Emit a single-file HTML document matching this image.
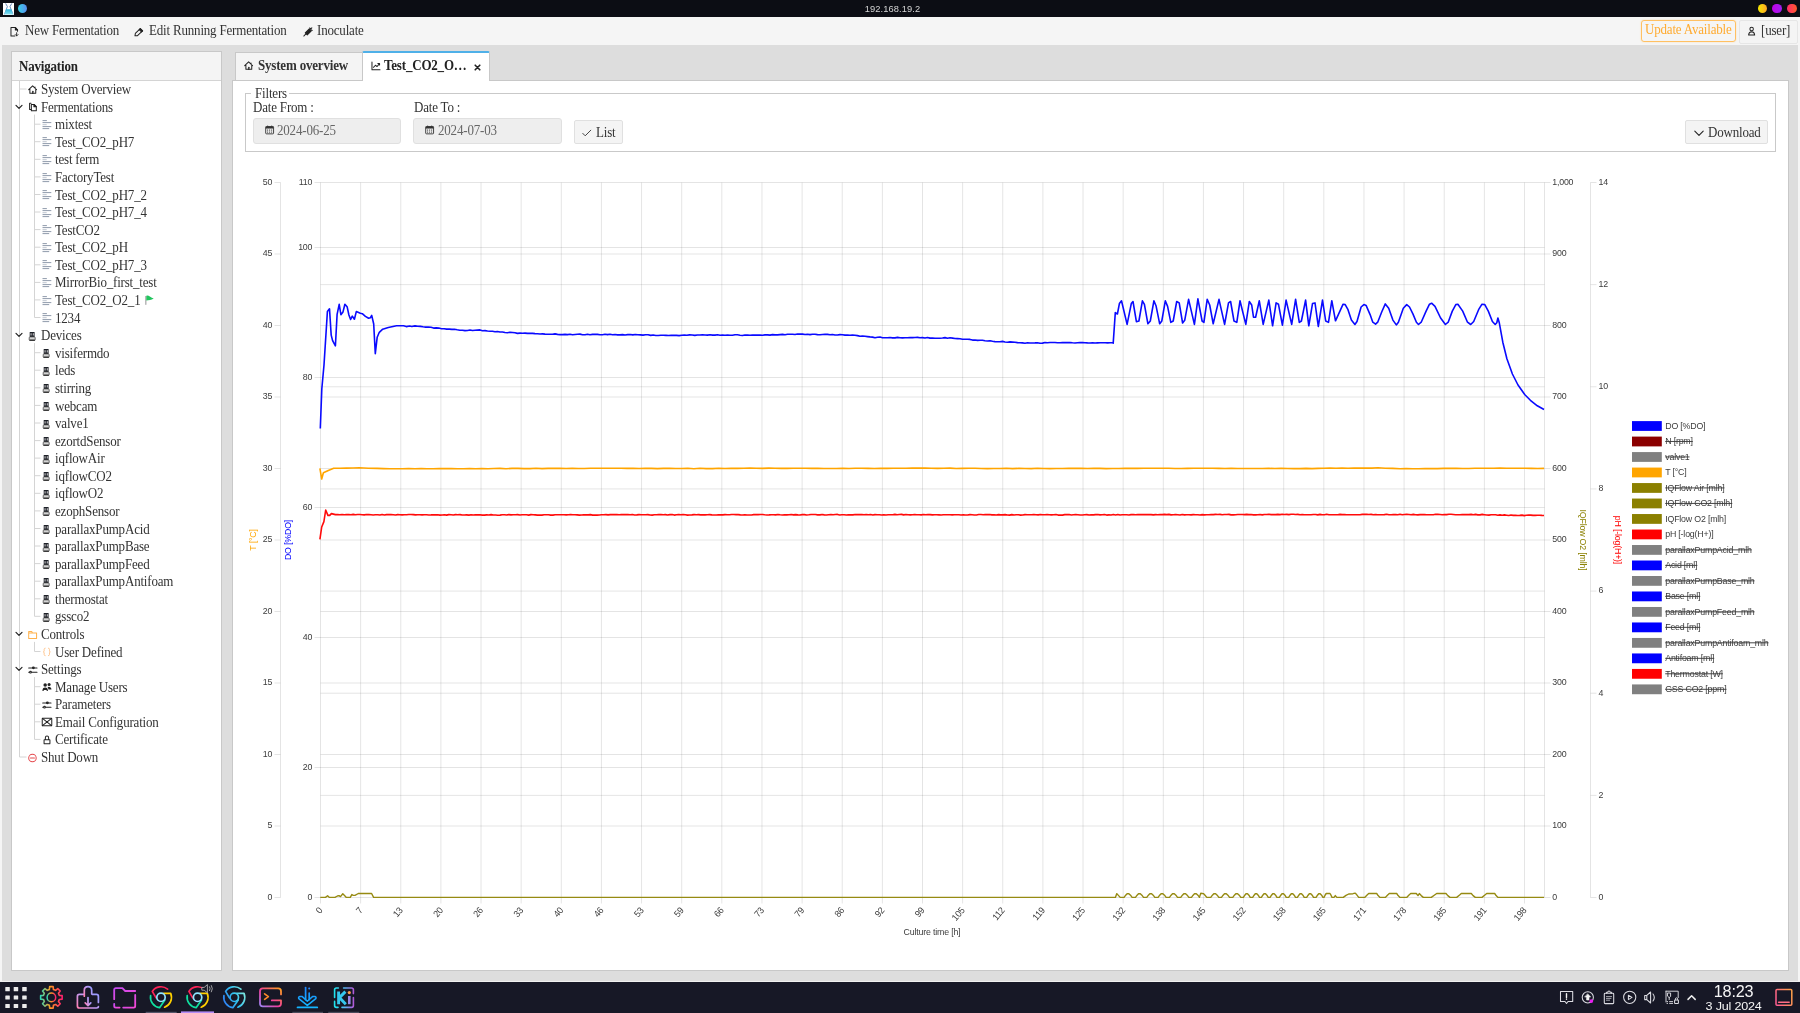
<!DOCTYPE html>
<html lang="en"><head><meta charset="utf-8"><title>192.168.19.2</title>
<style>
*{box-sizing:border-box}
html,body{margin:0;padding:0}
body{width:1800px;height:1013px;overflow:hidden;position:relative;background:#dddddd;will-change:transform;
 font-family:"Liberation Serif",serif;font-size:14px;letter-spacing:-0.2px;color:#333;line-height:15px}
.x{display:inline-block;white-space:nowrap;transform:scaleX(.928);transform-origin:0 50%}
.abs{position:absolute}
.ic{width:12px;height:12px;display:block}
.ic svg{display:block}
.tr{white-space:nowrap;height:17px;line-height:17px;color:#333;transform:scaleX(.928);transform-origin:0 50%}
#title{left:0;top:0;width:1800px;height:17px;background:#0c0d14}
#title .t{left:0;width:1785px;top:4px;text-align:center;font:9.3px "Liberation Sans",sans-serif;letter-spacing:0.1px;color:#d4d4d4;line-height:10px}
#tool{left:0;top:17px;width:1800px;height:28px;background:#f5f5f5}
.tb{white-space:nowrap;line-height:17px;color:#333;transform:scaleX(.928);transform-origin:0 50%}
#nav{left:11px;top:51px;width:211px;height:920px;background:#fff;border:1px solid #c8c8c8}
#navh{left:0;top:0;width:209px;height:29px;background:#f4f4f4;border-bottom:1px solid #d4d4d4}
#panel{left:232px;top:80px;width:1557px;height:891px;background:#fff;border:1px solid #c8c8c8}
.tab{top:52px;height:29px;background:#f4f4f4;border:1px solid #c8c8c8;border-bottom:none;font-weight:bold;white-space:nowrap}
#task{left:0;top:982px;width:1800px;height:31px;background:#171826}
.inp{height:26px;background:#eeeeee;border:1px solid #e0e0e0;border-radius:3px;color:#666}
.btn{background:#f4f4f4;border:1px solid #e0e0e0;border-radius:2px;white-space:nowrap}
</style></head><body>
<!-- side strips -->
<div class="abs" style="left:0;top:17px;width:2px;height:965px;background:#f5f5f5"></div>
<div class="abs" style="left:1798px;top:17px;width:2px;height:965px;background:#f5f5f5"></div>
<!-- title bar -->
<div id="title" class="abs">
 <span class="abs" style="left:2.8px;top:3px"><svg width="11.4" height="12" viewBox="0 0 11.4 12" ><defs><linearGradient id="gL" x1="0" y1="0" x2="0" y2="1"><stop offset="0" stop-color="#2ab4dc"/><stop offset="1" stop-color="#8fe2f2"/></linearGradient></defs><rect x="0" y="0" width="11.4" height="12" fill="#ffffff"/><path d="M2.6 0.4L4.4 3.6L1.4 11.4M8.8 0.4L7 3.6L10 11.4" fill="none" stroke="#5a7fb4" stroke-width=".9"/><path d="M3.1 6.2H8.3L10.2 11.6H1.2Z" fill="url(#gL)"/></svg></span>
 <span class="abs" style="left:18.1px;top:4.1px;width:9.4px;height:9.4px;border-radius:50%;background:linear-gradient(90deg,#36d2e6,#5b8df0)"></span>
 <div class="abs t">192.168.19.2</div>
 <span class="abs" style="left:1757.8px;top:4px;width:9.4px;height:9.4px;border-radius:50%;background:linear-gradient(90deg,#f4e800,#ffa726)"></span>
 <span class="abs" style="left:1772.4px;top:4px;width:9.4px;height:9.4px;border-radius:50%;background:linear-gradient(90deg,#c000e8,#a020f0)"></span>
 <span class="abs" style="left:1787.2px;top:4px;width:9.4px;height:9.4px;border-radius:50%;background:linear-gradient(90deg,#ff2d6a,#ff5a2a)"></span>
</div>
<!-- toolbar -->
<div id="tool" class="abs">
 <span class="abs ic" style="left:8.9px;top:8.5px"><svg width="12" height="12" viewBox="-0.55 -0.55 13.1 13.1" ><g fill="none" stroke="#222" stroke-width="1.1" stroke-linecap="round" stroke-linejoin="round" stroke-width="1.25"><path d="M8.8 5.2V3.6L6.6 1.2H1.6V10.4H5.8"/><path d="M6.4 1.4V3.8H8.8Z" fill="#222"/><path d="M7.8 6.8V10.2M6.3 8.8L7.8 10.3L9.3 8.8" stroke-width="1"/></g></svg></span><span class="abs tb" style="left:25px;top:5.3px">New Fermentation</span>
 <span class="abs ic" style="left:133px;top:8.5px"><svg width="12" height="12" viewBox="-0.55 -0.55 13.1 13.1" ><g fill="none" stroke="#222" stroke-width="1.1" stroke-linecap="round" stroke-linejoin="round" stroke-width="1.2"><path d="M1.6 10.2L2 7.6L7.4 2.4L9.8 4.8L4.4 10Z"/><path d="M6.2 3.4L8.8 6L10 4.8L7.4 2.2Z" fill="#222"/></g></svg></span><span class="abs tb" style="left:148.5px;top:5.3px">Edit Running Fermentation</span>
 <span class="abs ic" style="left:301.5px;top:8.5px"><svg width="12" height="12" viewBox="-0.55 -0.55 13.1 13.1" ><g fill="none" stroke="#222" stroke-width="1.1" stroke-linecap="round" stroke-linejoin="round" stroke-width="1.2"><path d="M1.4 10.4L3.4 8.4"/><path d="M3 7L7.4 2.6L9.6 4.8L5.2 9.2Z" fill="#222"/><path d="M7.8 1.6L10.6 4.4M8.8 2.8L10.2 1.4"/></g></svg></span><span class="abs tb" style="left:316.5px;top:5.3px">Inoculate</span>
 <div class="abs" style="left:1641px;top:2.5px;width:95px;height:22.5px;border:1px solid #ffc062;border-radius:3px;box-shadow:0 0 1.5px #ffd699;color:#ffab30;line-height:18.5px;padding-left:2.6px;white-space:nowrap"><span class="x">Update Available</span></div>
 <div class="abs btn" style="left:1739px;top:3px;width:59px;height:23.5px;border-color:#e6e6e6"><span class="abs ic" style="left:6px;top:4px"><svg width="12" height="12" viewBox="-0.55 -0.55 13.1 13.1" ><g fill="none" stroke="#222" stroke-width="1.1" stroke-linecap="round" stroke-linejoin="round" stroke="#333" stroke-width=".95"><circle cx="5.6" cy="3.9" r="1.9"/><path d="M2.3 10.4Q2.5 7 5.6 6.8Q8.7 7 8.9 10.4Z"/></g></svg></span><span class="abs tb" style="left:21.3px;top:1px">[user]</span></div>
</div>
<!-- navigation -->
<div id="nav" class="abs"><div id="navh" class="abs"><span class="abs x" style="left:6.5px;top:6.7px;font-weight:bold;color:#222">Navigation</span></div></div>
<svg class="abs" style="left:0;top:0" width="230" height="800" fill="none" stroke="#d4d4d4" stroke-width="1"><path d="M19.5 80.5V757.0" /><path d="M19.5 89.0H26.5" /><path d="M34.5 114.6V317.5" /><path d="M34.5 124.2H40.5" /><path d="M34.5 141.7H40.5" /><path d="M34.5 159.3H40.5" /><path d="M34.5 176.9H40.5" /><path d="M34.5 194.5H40.5" /><path d="M34.5 212.0H40.5" /><path d="M34.5 229.6H40.5" /><path d="M34.5 247.2H40.5" /><path d="M34.5 264.8H40.5" /><path d="M34.5 282.4H40.5" /><path d="M34.5 299.9H40.5" /><path d="M34.5 317.5H40.5" /><path d="M34.5 343.1V616.3" /><path d="M34.5 352.7H40.5" /><path d="M34.5 370.2H40.5" /><path d="M34.5 387.8H40.5" /><path d="M34.5 405.4H40.5" /><path d="M34.5 423.0H40.5" /><path d="M34.5 440.6H40.5" /><path d="M34.5 458.1H40.5" /><path d="M34.5 475.7H40.5" /><path d="M34.5 493.3H40.5" /><path d="M34.5 510.9H40.5" /><path d="M34.5 528.5H40.5" /><path d="M34.5 546.0H40.5" /><path d="M34.5 563.6H40.5" /><path d="M34.5 581.2H40.5" /><path d="M34.5 598.8H40.5" /><path d="M34.5 616.3H40.5" /><path d="M34.5 641.9V651.5" /><path d="M34.5 651.5H40.5" /><path d="M34.5 677.1V739.4" /><path d="M34.5 686.7H40.5" /><path d="M34.5 704.2H40.5" /><path d="M34.5 721.8H40.5" /><path d="M34.5 739.4H40.5" /><path d="M19.5 757.0H26.5" /></svg>
<span class="abs ic" style="left:27px;top:83.60px"><svg width="12" height="12" viewBox="-0.55 -0.55 13.1 13.1" ><g fill="none" stroke="#222" stroke-width="1.1" stroke-linecap="round" stroke-linejoin="round"><path d="M1.3 5.6L5.6 1.5L7.6 3.3M8.2 2.6V4M9.9 5.6L8.9 4.8M2.6 5V9.6H9V5"/><path d="M5.8 9.6V7.4" stroke-width="1.4"/></g></svg></span>
<span class="abs tr" style="left:41px;top:81.10px">System Overview</span>
<svg class="abs" style="left:14px;top:102.98px" width="10" height="8" viewBox="0 0 10 8" fill="none" stroke="#222" stroke-width="1.2" stroke-linecap="round" stroke-linejoin="round"><path d="M2 2.4L5 5.4L8 2.4"/></svg>
<span class="abs ic" style="left:27px;top:101.18px"><svg width="12" height="12" viewBox="-0.55 -0.55 13.1 13.1" ><g fill="none" stroke="#222" stroke-width="1.1" stroke-linecap="round" stroke-linejoin="round"><path d="M3.9 2H2.3V8.6H3.9"/><path d="M4.2 3.2H7L9.6 5.7V10.2H4.2Z"/><path d="M7 3.2V5.7H9.6Z" fill="#222"/></g></svg></span>
<span class="abs tr" style="left:41px;top:98.68px">Fermentations</span>
<span class="abs ic" style="left:40.5px;top:117.86px"><svg width="12" height="12" viewBox="0 0 12 12" ><g stroke="#6b7a90" stroke-width="0.75" fill="none"><path d="M1.5 2.6H5.9"/><path d="M1.5 4.6H10.3"/><path d="M1.5 6.7H5.7" opacity=".6"/><path d="M1.5 8.6H10.3"/><path d="M1.5 10.6H8.2"/></g></svg></span>
<span class="abs tr" style="left:55px;top:116.26px">mixtest</span>
<span class="abs ic" style="left:40.5px;top:135.43px"><svg width="12" height="12" viewBox="0 0 12 12" ><g stroke="#6b7a90" stroke-width="0.75" fill="none"><path d="M1.5 2.6H5.9"/><path d="M1.5 4.6H10.3"/><path d="M1.5 6.7H5.7" opacity=".6"/><path d="M1.5 8.6H10.3"/><path d="M1.5 10.6H8.2"/></g></svg></span>
<span class="abs tr" style="left:55px;top:133.83px">Test_CO2_pH7</span>
<span class="abs ic" style="left:40.5px;top:153.01px"><svg width="12" height="12" viewBox="0 0 12 12" ><g stroke="#6b7a90" stroke-width="0.75" fill="none"><path d="M1.5 2.6H5.9"/><path d="M1.5 4.6H10.3"/><path d="M1.5 6.7H5.7" opacity=".6"/><path d="M1.5 8.6H10.3"/><path d="M1.5 10.6H8.2"/></g></svg></span>
<span class="abs tr" style="left:55px;top:151.41px">test ferm</span>
<span class="abs ic" style="left:40.5px;top:170.59px"><svg width="12" height="12" viewBox="0 0 12 12" ><g stroke="#6b7a90" stroke-width="0.75" fill="none"><path d="M1.5 2.6H5.9"/><path d="M1.5 4.6H10.3"/><path d="M1.5 6.7H5.7" opacity=".6"/><path d="M1.5 8.6H10.3"/><path d="M1.5 10.6H8.2"/></g></svg></span>
<span class="abs tr" style="left:55px;top:168.99px">FactoryTest</span>
<span class="abs ic" style="left:40.5px;top:188.17px"><svg width="12" height="12" viewBox="0 0 12 12" ><g stroke="#6b7a90" stroke-width="0.75" fill="none"><path d="M1.5 2.6H5.9"/><path d="M1.5 4.6H10.3"/><path d="M1.5 6.7H5.7" opacity=".6"/><path d="M1.5 8.6H10.3"/><path d="M1.5 10.6H8.2"/></g></svg></span>
<span class="abs tr" style="left:55px;top:186.57px">Test_CO2_pH7_2</span>
<span class="abs ic" style="left:40.5px;top:205.75px"><svg width="12" height="12" viewBox="0 0 12 12" ><g stroke="#6b7a90" stroke-width="0.75" fill="none"><path d="M1.5 2.6H5.9"/><path d="M1.5 4.6H10.3"/><path d="M1.5 6.7H5.7" opacity=".6"/><path d="M1.5 8.6H10.3"/><path d="M1.5 10.6H8.2"/></g></svg></span>
<span class="abs tr" style="left:55px;top:204.15px">Test_CO2_pH7_4</span>
<span class="abs ic" style="left:40.5px;top:223.32px"><svg width="12" height="12" viewBox="0 0 12 12" ><g stroke="#6b7a90" stroke-width="0.75" fill="none"><path d="M1.5 2.6H5.9"/><path d="M1.5 4.6H10.3"/><path d="M1.5 6.7H5.7" opacity=".6"/><path d="M1.5 8.6H10.3"/><path d="M1.5 10.6H8.2"/></g></svg></span>
<span class="abs tr" style="left:55px;top:221.72px">TestCO2</span>
<span class="abs ic" style="left:40.5px;top:240.90px"><svg width="12" height="12" viewBox="0 0 12 12" ><g stroke="#6b7a90" stroke-width="0.75" fill="none"><path d="M1.5 2.6H5.9"/><path d="M1.5 4.6H10.3"/><path d="M1.5 6.7H5.7" opacity=".6"/><path d="M1.5 8.6H10.3"/><path d="M1.5 10.6H8.2"/></g></svg></span>
<span class="abs tr" style="left:55px;top:239.30px">Test_CO2_pH</span>
<span class="abs ic" style="left:40.5px;top:258.48px"><svg width="12" height="12" viewBox="0 0 12 12" ><g stroke="#6b7a90" stroke-width="0.75" fill="none"><path d="M1.5 2.6H5.9"/><path d="M1.5 4.6H10.3"/><path d="M1.5 6.7H5.7" opacity=".6"/><path d="M1.5 8.6H10.3"/><path d="M1.5 10.6H8.2"/></g></svg></span>
<span class="abs tr" style="left:55px;top:256.88px">Test_CO2_pH7_3</span>
<span class="abs ic" style="left:40.5px;top:276.06px"><svg width="12" height="12" viewBox="0 0 12 12" ><g stroke="#6b7a90" stroke-width="0.75" fill="none"><path d="M1.5 2.6H5.9"/><path d="M1.5 4.6H10.3"/><path d="M1.5 6.7H5.7" opacity=".6"/><path d="M1.5 8.6H10.3"/><path d="M1.5 10.6H8.2"/></g></svg></span>
<span class="abs tr" style="left:55px;top:274.46px">MirrorBio_first_test</span>
<span class="abs ic" style="left:40.5px;top:293.64px"><svg width="12" height="12" viewBox="0 0 12 12" ><g stroke="#6b7a90" stroke-width="0.75" fill="none"><path d="M1.5 2.6H5.9"/><path d="M1.5 4.6H10.3"/><path d="M1.5 6.7H5.7" opacity=".6"/><path d="M1.5 8.6H10.3"/><path d="M1.5 10.6H8.2"/></g></svg></span>
<span class="abs tr" style="left:55px;top:292.04px">Test_CO2_O2_1<svg style="margin-left:5px;vertical-align:-0.2px" width="10" height="10" viewBox="0 0 10 10"><path d="M0.9 1V9.8" stroke="#8c8c8c" stroke-width="1"/><path d="M1.4 0.7Q3.4 0.2 5.2 1.4Q7.4 2.8 9.4 3.4Q7.2 4.6 5.4 4.9Q3.2 5.2 1.4 5.6Z" fill="#22c55e"/></svg></span>
<span class="abs ic" style="left:40.5px;top:311.21px"><svg width="12" height="12" viewBox="0 0 12 12" ><g stroke="#6b7a90" stroke-width="0.75" fill="none"><path d="M1.5 2.6H5.9"/><path d="M1.5 4.6H10.3"/><path d="M1.5 6.7H5.7" opacity=".6"/><path d="M1.5 8.6H10.3"/><path d="M1.5 10.6H8.2"/></g></svg></span>
<span class="abs tr" style="left:55px;top:309.61px">1234</span>
<svg class="abs" style="left:14px;top:331.49px" width="10" height="8" viewBox="0 0 10 8" fill="none" stroke="#222" stroke-width="1.2" stroke-linecap="round" stroke-linejoin="round"><path d="M2 2.4L5 5.4L8 2.4"/></svg>
<span class="abs ic" style="left:27px;top:329.69px"><svg width="12" height="12" viewBox="0 0 12 12" ><rect x="2.7" y="1.9" width="4.9" height="5.2" rx=".5" fill="#1e2128"/><rect x="3.6" y="3.2" width=".9" height="2.3" fill="#e6e6e6"/><rect x="5.8" y="3.2" width=".9" height="2.3" fill="#e6e6e6"/><rect x="2.2" y="6.9" width="6" height="3.6" rx=".9" fill="#d4d4d4" stroke="#4a4a4a" stroke-width=".8"/><rect x="2.4" y="9.5" width="5.6" height="1.2" rx=".4" fill="#2c2c2c"/></svg></span>
<span class="abs tr" style="left:41px;top:327.19px">Devices</span>
<span class="abs ic" style="left:40.5px;top:347.27px"><svg width="12" height="12" viewBox="0 0 12 12" ><rect x="2.7" y="1.9" width="4.9" height="5.2" rx=".5" fill="#1e2128"/><rect x="3.6" y="3.2" width=".9" height="2.3" fill="#e6e6e6"/><rect x="5.8" y="3.2" width=".9" height="2.3" fill="#e6e6e6"/><rect x="2.2" y="6.9" width="6" height="3.6" rx=".9" fill="#d4d4d4" stroke="#4a4a4a" stroke-width=".8"/><rect x="2.4" y="9.5" width="5.6" height="1.2" rx=".4" fill="#2c2c2c"/></svg></span>
<span class="abs tr" style="left:55px;top:344.77px">visifermdo</span>
<span class="abs ic" style="left:40.5px;top:364.85px"><svg width="12" height="12" viewBox="0 0 12 12" ><rect x="2.7" y="1.9" width="4.9" height="5.2" rx=".5" fill="#1e2128"/><rect x="3.6" y="3.2" width=".9" height="2.3" fill="#e6e6e6"/><rect x="5.8" y="3.2" width=".9" height="2.3" fill="#e6e6e6"/><rect x="2.2" y="6.9" width="6" height="3.6" rx=".9" fill="#d4d4d4" stroke="#4a4a4a" stroke-width=".8"/><rect x="2.4" y="9.5" width="5.6" height="1.2" rx=".4" fill="#2c2c2c"/></svg></span>
<span class="abs tr" style="left:55px;top:362.35px">leds</span>
<span class="abs ic" style="left:40.5px;top:382.43px"><svg width="12" height="12" viewBox="0 0 12 12" ><rect x="2.7" y="1.9" width="4.9" height="5.2" rx=".5" fill="#1e2128"/><rect x="3.6" y="3.2" width=".9" height="2.3" fill="#e6e6e6"/><rect x="5.8" y="3.2" width=".9" height="2.3" fill="#e6e6e6"/><rect x="2.2" y="6.9" width="6" height="3.6" rx=".9" fill="#d4d4d4" stroke="#4a4a4a" stroke-width=".8"/><rect x="2.4" y="9.5" width="5.6" height="1.2" rx=".4" fill="#2c2c2c"/></svg></span>
<span class="abs tr" style="left:55px;top:379.93px">stirring</span>
<span class="abs ic" style="left:40.5px;top:400.00px"><svg width="12" height="12" viewBox="0 0 12 12" ><rect x="2.7" y="1.9" width="4.9" height="5.2" rx=".5" fill="#1e2128"/><rect x="3.6" y="3.2" width=".9" height="2.3" fill="#e6e6e6"/><rect x="5.8" y="3.2" width=".9" height="2.3" fill="#e6e6e6"/><rect x="2.2" y="6.9" width="6" height="3.6" rx=".9" fill="#d4d4d4" stroke="#4a4a4a" stroke-width=".8"/><rect x="2.4" y="9.5" width="5.6" height="1.2" rx=".4" fill="#2c2c2c"/></svg></span>
<span class="abs tr" style="left:55px;top:397.50px">webcam</span>
<span class="abs ic" style="left:40.5px;top:417.58px"><svg width="12" height="12" viewBox="0 0 12 12" ><rect x="2.7" y="1.9" width="4.9" height="5.2" rx=".5" fill="#1e2128"/><rect x="3.6" y="3.2" width=".9" height="2.3" fill="#e6e6e6"/><rect x="5.8" y="3.2" width=".9" height="2.3" fill="#e6e6e6"/><rect x="2.2" y="6.9" width="6" height="3.6" rx=".9" fill="#d4d4d4" stroke="#4a4a4a" stroke-width=".8"/><rect x="2.4" y="9.5" width="5.6" height="1.2" rx=".4" fill="#2c2c2c"/></svg></span>
<span class="abs tr" style="left:55px;top:415.08px">valve1</span>
<span class="abs ic" style="left:40.5px;top:435.16px"><svg width="12" height="12" viewBox="0 0 12 12" ><rect x="2.7" y="1.9" width="4.9" height="5.2" rx=".5" fill="#1e2128"/><rect x="3.6" y="3.2" width=".9" height="2.3" fill="#e6e6e6"/><rect x="5.8" y="3.2" width=".9" height="2.3" fill="#e6e6e6"/><rect x="2.2" y="6.9" width="6" height="3.6" rx=".9" fill="#d4d4d4" stroke="#4a4a4a" stroke-width=".8"/><rect x="2.4" y="9.5" width="5.6" height="1.2" rx=".4" fill="#2c2c2c"/></svg></span>
<span class="abs tr" style="left:55px;top:432.66px">ezortdSensor</span>
<span class="abs ic" style="left:40.5px;top:452.74px"><svg width="12" height="12" viewBox="0 0 12 12" ><rect x="2.7" y="1.9" width="4.9" height="5.2" rx=".5" fill="#1e2128"/><rect x="3.6" y="3.2" width=".9" height="2.3" fill="#e6e6e6"/><rect x="5.8" y="3.2" width=".9" height="2.3" fill="#e6e6e6"/><rect x="2.2" y="6.9" width="6" height="3.6" rx=".9" fill="#d4d4d4" stroke="#4a4a4a" stroke-width=".8"/><rect x="2.4" y="9.5" width="5.6" height="1.2" rx=".4" fill="#2c2c2c"/></svg></span>
<span class="abs tr" style="left:55px;top:450.24px">iqflowAir</span>
<span class="abs ic" style="left:40.5px;top:470.32px"><svg width="12" height="12" viewBox="0 0 12 12" ><rect x="2.7" y="1.9" width="4.9" height="5.2" rx=".5" fill="#1e2128"/><rect x="3.6" y="3.2" width=".9" height="2.3" fill="#e6e6e6"/><rect x="5.8" y="3.2" width=".9" height="2.3" fill="#e6e6e6"/><rect x="2.2" y="6.9" width="6" height="3.6" rx=".9" fill="#d4d4d4" stroke="#4a4a4a" stroke-width=".8"/><rect x="2.4" y="9.5" width="5.6" height="1.2" rx=".4" fill="#2c2c2c"/></svg></span>
<span class="abs tr" style="left:55px;top:467.82px">iqflowCO2</span>
<span class="abs ic" style="left:40.5px;top:487.89px"><svg width="12" height="12" viewBox="0 0 12 12" ><rect x="2.7" y="1.9" width="4.9" height="5.2" rx=".5" fill="#1e2128"/><rect x="3.6" y="3.2" width=".9" height="2.3" fill="#e6e6e6"/><rect x="5.8" y="3.2" width=".9" height="2.3" fill="#e6e6e6"/><rect x="2.2" y="6.9" width="6" height="3.6" rx=".9" fill="#d4d4d4" stroke="#4a4a4a" stroke-width=".8"/><rect x="2.4" y="9.5" width="5.6" height="1.2" rx=".4" fill="#2c2c2c"/></svg></span>
<span class="abs tr" style="left:55px;top:485.39px">iqflowO2</span>
<span class="abs ic" style="left:40.5px;top:505.47px"><svg width="12" height="12" viewBox="0 0 12 12" ><rect x="2.7" y="1.9" width="4.9" height="5.2" rx=".5" fill="#1e2128"/><rect x="3.6" y="3.2" width=".9" height="2.3" fill="#e6e6e6"/><rect x="5.8" y="3.2" width=".9" height="2.3" fill="#e6e6e6"/><rect x="2.2" y="6.9" width="6" height="3.6" rx=".9" fill="#d4d4d4" stroke="#4a4a4a" stroke-width=".8"/><rect x="2.4" y="9.5" width="5.6" height="1.2" rx=".4" fill="#2c2c2c"/></svg></span>
<span class="abs tr" style="left:55px;top:502.97px">ezophSensor</span>
<span class="abs ic" style="left:40.5px;top:523.05px"><svg width="12" height="12" viewBox="0 0 12 12" ><rect x="2.7" y="1.9" width="4.9" height="5.2" rx=".5" fill="#1e2128"/><rect x="3.6" y="3.2" width=".9" height="2.3" fill="#e6e6e6"/><rect x="5.8" y="3.2" width=".9" height="2.3" fill="#e6e6e6"/><rect x="2.2" y="6.9" width="6" height="3.6" rx=".9" fill="#d4d4d4" stroke="#4a4a4a" stroke-width=".8"/><rect x="2.4" y="9.5" width="5.6" height="1.2" rx=".4" fill="#2c2c2c"/></svg></span>
<span class="abs tr" style="left:55px;top:520.55px">parallaxPumpAcid</span>
<span class="abs ic" style="left:40.5px;top:540.63px"><svg width="12" height="12" viewBox="0 0 12 12" ><rect x="2.7" y="1.9" width="4.9" height="5.2" rx=".5" fill="#1e2128"/><rect x="3.6" y="3.2" width=".9" height="2.3" fill="#e6e6e6"/><rect x="5.8" y="3.2" width=".9" height="2.3" fill="#e6e6e6"/><rect x="2.2" y="6.9" width="6" height="3.6" rx=".9" fill="#d4d4d4" stroke="#4a4a4a" stroke-width=".8"/><rect x="2.4" y="9.5" width="5.6" height="1.2" rx=".4" fill="#2c2c2c"/></svg></span>
<span class="abs tr" style="left:55px;top:538.13px">parallaxPumpBase</span>
<span class="abs ic" style="left:40.5px;top:558.21px"><svg width="12" height="12" viewBox="0 0 12 12" ><rect x="2.7" y="1.9" width="4.9" height="5.2" rx=".5" fill="#1e2128"/><rect x="3.6" y="3.2" width=".9" height="2.3" fill="#e6e6e6"/><rect x="5.8" y="3.2" width=".9" height="2.3" fill="#e6e6e6"/><rect x="2.2" y="6.9" width="6" height="3.6" rx=".9" fill="#d4d4d4" stroke="#4a4a4a" stroke-width=".8"/><rect x="2.4" y="9.5" width="5.6" height="1.2" rx=".4" fill="#2c2c2c"/></svg></span>
<span class="abs tr" style="left:55px;top:555.71px">parallaxPumpFeed</span>
<span class="abs ic" style="left:40.5px;top:575.78px"><svg width="12" height="12" viewBox="0 0 12 12" ><rect x="2.7" y="1.9" width="4.9" height="5.2" rx=".5" fill="#1e2128"/><rect x="3.6" y="3.2" width=".9" height="2.3" fill="#e6e6e6"/><rect x="5.8" y="3.2" width=".9" height="2.3" fill="#e6e6e6"/><rect x="2.2" y="6.9" width="6" height="3.6" rx=".9" fill="#d4d4d4" stroke="#4a4a4a" stroke-width=".8"/><rect x="2.4" y="9.5" width="5.6" height="1.2" rx=".4" fill="#2c2c2c"/></svg></span>
<span class="abs tr" style="left:55px;top:573.28px">parallaxPumpAntifoam</span>
<span class="abs ic" style="left:40.5px;top:593.36px"><svg width="12" height="12" viewBox="0 0 12 12" ><rect x="2.7" y="1.9" width="4.9" height="5.2" rx=".5" fill="#1e2128"/><rect x="3.6" y="3.2" width=".9" height="2.3" fill="#e6e6e6"/><rect x="5.8" y="3.2" width=".9" height="2.3" fill="#e6e6e6"/><rect x="2.2" y="6.9" width="6" height="3.6" rx=".9" fill="#d4d4d4" stroke="#4a4a4a" stroke-width=".8"/><rect x="2.4" y="9.5" width="5.6" height="1.2" rx=".4" fill="#2c2c2c"/></svg></span>
<span class="abs tr" style="left:55px;top:590.86px">thermostat</span>
<span class="abs ic" style="left:40.5px;top:610.94px"><svg width="12" height="12" viewBox="0 0 12 12" ><rect x="2.7" y="1.9" width="4.9" height="5.2" rx=".5" fill="#1e2128"/><rect x="3.6" y="3.2" width=".9" height="2.3" fill="#e6e6e6"/><rect x="5.8" y="3.2" width=".9" height="2.3" fill="#e6e6e6"/><rect x="2.2" y="6.9" width="6" height="3.6" rx=".9" fill="#d4d4d4" stroke="#4a4a4a" stroke-width=".8"/><rect x="2.4" y="9.5" width="5.6" height="1.2" rx=".4" fill="#2c2c2c"/></svg></span>
<span class="abs tr" style="left:55px;top:608.44px">gssco2</span>
<svg class="abs" style="left:14px;top:630.32px" width="10" height="8" viewBox="0 0 10 8" fill="none" stroke="#222" stroke-width="1.2" stroke-linecap="round" stroke-linejoin="round"><path d="M2 2.4L5 5.4L8 2.4"/></svg>
<span class="abs ic" style="left:27px;top:628.52px"><svg width="12" height="12" viewBox="-0.55 -0.55 13.1 13.1" ><path d="M1.3 9.7V2.3H4.6L5.5 3.8H9.9V9.7Z M1.3 3.9H5.5" fill="none" stroke="#ffb24d" stroke-width="1.1" stroke-linejoin="round"/></svg></span>
<span class="abs tr" style="left:41px;top:626.02px">Controls</span>
<span class="abs ic" style="left:40.5px;top:646.10px"><svg width="12" height="12" viewBox="-0.55 -0.55 13.1 13.1" ><g fill="none" stroke="#ffc38a" stroke-width="1" stroke-linecap="round"><path d="M4 1.8Q2.9 1.8 2.9 3V4.8Q2.9 5.8 2 5.9Q2.9 6 2.9 7V8.8Q2.9 10 4 10"/><path d="M7.6 1.8Q8.7 1.8 8.7 3V4.8Q8.7 5.8 9.6 5.9Q8.7 6 8.7 7V8.8Q8.7 10 7.6 10"/></g></svg></span>
<span class="abs tr" style="left:55px;top:643.60px">User Defined</span>
<svg class="abs" style="left:14px;top:665.47px" width="10" height="8" viewBox="0 0 10 8" fill="none" stroke="#222" stroke-width="1.2" stroke-linecap="round" stroke-linejoin="round"><path d="M2 2.4L5 5.4L8 2.4"/></svg>
<span class="abs ic" style="left:27px;top:663.67px"><svg width="12" height="12" viewBox="-0.55 -0.55 13.1 13.1" ><g fill="none" stroke="#222" stroke-width="1.1" stroke-linecap="round" stroke-linejoin="round" stroke-width=".95"><path d="M1.3 3.8H5M7.6 3.8H10.4M1.3 8.4H2M4.8 8.4H10.4"/><circle cx="6.4" cy="3.6" r="1" fill="#222"/><circle cx="3.3" cy="8.4" r="1"/></g></svg></span>
<span class="abs tr" style="left:41px;top:661.17px">Settings</span>
<span class="abs ic" style="left:40.5px;top:681.25px"><svg width="12" height="12" viewBox="-0.55 -0.55 13.1 13.1" ><g fill="#222"><circle cx="4" cy="3.8" r="1.9"/><circle cx="8.3" cy="3.2" r="1.7"/><path d="M1 10.3Q1 6.6 4 6.6Q7 6.6 7 10.3H5.6V9.3H2.4V10.3Z"/><path d="M6.6 6.3Q8 5.4 9.6 6.2Q10.9 7 10.9 8.8H7.6Q7.4 7.2 6.6 6.3Z"/></g></svg></span>
<span class="abs tr" style="left:55px;top:678.75px">Manage Users</span>
<span class="abs ic" style="left:40.5px;top:698.83px"><svg width="12" height="12" viewBox="-0.55 -0.55 13.1 13.1" ><g fill="none" stroke="#222" stroke-width="1.1" stroke-linecap="round" stroke-linejoin="round" stroke-width=".95"><path d="M1.3 3.8H5M7.6 3.8H10.4M1.3 8.4H2M4.8 8.4H10.4"/><circle cx="6.4" cy="3.6" r="1" fill="#222"/><circle cx="3.3" cy="8.4" r="1"/></g></svg></span>
<span class="abs tr" style="left:55px;top:696.33px">Parameters</span>
<span class="abs ic" style="left:40.5px;top:716.41px"><svg width="12" height="12" viewBox="-0.55 -0.55 13.1 13.1" ><g fill="none" stroke="#222" stroke-width="1.1" stroke-linecap="round" stroke-linejoin="round" stroke-width=".9"><rect x=".8" y="1.8" width="10.4" height="8.4" rx=".6"/><path d="M1 2L11 10M11 2L1 10"/></g></svg></span>
<span class="abs tr" style="left:55px;top:713.91px">Email Configuration</span>
<span class="abs ic" style="left:40.5px;top:733.99px"><svg width="12" height="12" viewBox="-0.55 -0.55 13.1 13.1" ><g fill="none" stroke="#222" stroke-width="1.1" stroke-linecap="round" stroke-linejoin="round"><rect x="2.8" y="5.6" width="6.4" height="4.6" rx=".5"/><path d="M4.2 5.4V3.6Q4.2 1.7 6 1.7Q7.8 1.7 7.8 3.6V5.4"/></g></svg></span>
<span class="abs tr" style="left:55px;top:731.49px">Certificate</span>
<span class="abs ic" style="left:27px;top:751.56px"><svg width="12" height="12" viewBox="-0.55 -0.55 13.1 13.1" ><g fill="none" stroke="#e5484d" stroke-width="1.1" stroke-linecap="round"><circle cx="5.4" cy="6" r="4.1"/><path d="M3.3 6H7.5" stroke-width="1.3"/></g></svg></span>
<span class="abs tr" style="left:41px;top:749.06px">Shut Down</span>
<!-- tabs -->
<div class="abs tab" style="left:235px;width:128px"><span class="abs ic" style="left:6.6px;top:7.4px"><svg width="12" height="12" viewBox="-0.55 -0.55 13.1 13.1" ><g fill="none" stroke="#222" stroke-width="1.1" stroke-linecap="round" stroke-linejoin="round"><path d="M1.3 5.6L5.6 1.5L7.6 3.3M8.2 2.6V4M9.9 5.6L8.9 4.8M2.6 5V9.6H9V5"/><path d="M5.8 9.6V7.4" stroke-width="1.4"/></g></svg></span><span class="abs x" style="left:21.5px;top:5.3px;color:#333">System overview</span></div>
<div class="abs tab" style="left:362px;width:127.5px;top:51px;height:30px;background:#fff;border-top:2px solid #4fb0e8;border-radius:2px 2px 0 0;z-index:2"><span class="abs ic" style="left:6.6px;top:7.2px"><svg width="12" height="12" viewBox="-0.55 -0.55 13.1 13.1" ><g fill="none" stroke="#222" stroke-width="1.1" stroke-linecap="round" stroke-linejoin="round"><path d="M1.6 1.6V10H10.4"/><path d="M3.2 7.4L5.4 5.2L7.2 6.6L9.8 3.4M8 3.2H9.9V5"/></g></svg></span><span class="abs x" style="left:21px;top:5.3px;color:#222">Test_CO2_O…</span><span class="abs" style="left:109.5px;top:7px"><svg width="9" height="9" viewBox="0 0 9 9" ><path d="M2.2 2.2L6.8 6.8M6.8 2.2L2.2 6.8" stroke="#222" stroke-width="1.6" stroke-linecap="round"/></svg></span></div>
<!-- content panel -->
<div id="panel" class="abs">
 <div class="abs" style="left:12px;top:12px;width:1531px;height:58.5px;border:1px solid #c9c9c9"></div>
 <span class="abs" style="left:18px;top:4px;background:#fff;width:38px;height:16px"></span><span class="abs x" style="left:21.5px;top:5.2px;line-height:16px;color:#333">Filters</span>
 <span class="abs x" style="left:20px;top:18.8px;line-height:16px">Date From :</span>
 <span class="abs x" style="left:180.5px;top:18.8px;line-height:16px">Date To :</span>
 <div class="abs inp" style="left:19.5px;top:37px;width:148.5px"><span class="abs ic" style="left:10px;top:5px"><svg width="12" height="12" viewBox="-0.55 -0.55 13.1 13.1" ><rect x="1.3" y="2.2" width="8.6" height="8" rx=".8" fill="none" stroke="#333" stroke-width="1"/><rect x="1.3" y="2.2" width="8.6" height="2.2" fill="#333"/><path d="M3.4 1.2V2.6M7.8 1.2V2.6" stroke="#333" stroke-width="1"/><g fill="#333"><rect x="2.9" y="5.5" width="1" height="1.2"/><rect x="5.1" y="5.5" width="1" height="1.2"/><rect x="7.3" y="5.5" width="1" height="1.2"/><rect x="2.9" y="7.7" width="1" height="1.2"/><rect x="5.1" y="7.7" width="1" height="1.2"/><rect x="7.3" y="7.7" width="1" height="1.2"/></g></svg></span><span class="abs x" style="left:23.5px;top:4px">2024-06-25</span></div>
 <div class="abs inp" style="left:180px;top:37px;width:148.5px"><span class="abs ic" style="left:10px;top:5px"><svg width="12" height="12" viewBox="-0.55 -0.55 13.1 13.1" ><rect x="1.3" y="2.2" width="8.6" height="8" rx=".8" fill="none" stroke="#333" stroke-width="1"/><rect x="1.3" y="2.2" width="8.6" height="2.2" fill="#333"/><path d="M3.4 1.2V2.6M7.8 1.2V2.6" stroke="#333" stroke-width="1"/><g fill="#333"><rect x="2.9" y="5.5" width="1" height="1.2"/><rect x="5.1" y="5.5" width="1" height="1.2"/><rect x="7.3" y="5.5" width="1" height="1.2"/><rect x="2.9" y="7.7" width="1" height="1.2"/><rect x="5.1" y="7.7" width="1" height="1.2"/><rect x="7.3" y="7.7" width="1" height="1.2"/></g></svg></span><span class="abs x" style="left:23.5px;top:4px">2024-07-03</span></div>
 <div class="abs btn" style="left:340.5px;top:39px;width:49.5px;height:24px"><span class="abs ic" style="left:6.5px;top:5.5px"><svg width="12" height="12" viewBox="0 0 12 12" ><g fill="none" stroke="#222" stroke-width="1.1" stroke-linecap="round" stroke-linejoin="round" stroke-width="1"><path d="M1.8 6.4L4.2 8.8L9.8 3.2" stroke="#3a3a3a" stroke-width=".95"/></g></svg></span><span class="abs x" style="left:21.7px;top:4px">List</span></div>
 <div class="abs btn" style="left:1452px;top:39px;width:83px;height:24px"><span class="abs ic" style="left:6.5px;top:5.5px"><svg width="12" height="12" viewBox="0 0 12 12" ><g fill="none" stroke="#222" stroke-width="1.1" stroke-linecap="round" stroke-linejoin="round" stroke="#333" stroke-width=".85"><path d="M1.8 4.2L6 8.4L10.2 4.2"/></g></svg></span><span class="abs x" style="left:22px;top:4px">Download</span></div>
</div>
<svg class="abs" style="left:0;top:0;pointer-events:none" width="1800" height="980" viewBox="0 0 1800 980" font-family="Liberation Sans, sans-serif" font-size="9.375">
<path d="M320.5 182.5V903.5M360.63 182.5V903.5M400.77 182.5V903.5M440.9 182.5V903.5M481.03 182.5V903.5M521.16 182.5V903.5M561.3 182.5V903.5M601.43 182.5V903.5M641.56 182.5V903.5M681.7 182.5V903.5M721.83 182.5V903.5M761.96 182.5V903.5M802.1 182.5V903.5M842.23 182.5V903.5M882.36 182.5V903.5M922.5 182.5V903.5M962.63 182.5V903.5M1002.76 182.5V903.5M1042.89 182.5V903.5M1083.03 182.5V903.5M1123.16 182.5V903.5M1163.29 182.5V903.5M1203.43 182.5V903.5M1243.56 182.5V903.5M1283.69 182.5V903.5M1323.83 182.5V903.5M1363.96 182.5V903.5M1404.09 182.5V903.5M1444.22 182.5V903.5M1484.36 182.5V903.5M1524.49 182.5V903.5M280.5 182.5V897.5M1544.5 182.5V897.5M1590.5 182.5V897.5" fill="none" stroke="#000" stroke-opacity=".105" stroke-width="1"/>
<path d="M274.5 897.5H280.5M314.5 897.5H1550.5M1590.5 897.5H1596.5M274.5 826.0H280.5M320.5 826.0H1550.5M274.5 754.5H280.5M320.5 754.5H1550.5M274.5 683.0H280.5M320.5 683.0H1550.5M274.5 611.5H280.5M320.5 611.5H1550.5M274.5 540.0H280.5M320.5 540.0H1550.5M274.5 468.5H280.5M320.5 468.5H1550.5M274.5 397.0H280.5M320.5 397.0H1550.5M274.5 325.5H280.5M320.5 325.5H1550.5M274.5 254.0H280.5M320.5 254.0H1550.5M274.5 182.5H280.5M314.5 182.5H1550.5M1590.5 182.5H1596.5M314.5 767.5H1544.5M314.5 637.5H1544.5M314.5 507.5H1544.5M314.5 377.5H1544.5M314.5 247.5H1544.5M320.5 795.36H1544.5M1590.5 795.36H1596.5M320.5 693.21H1544.5M1590.5 693.21H1596.5M320.5 591.07H1544.5M1590.5 591.07H1596.5M320.5 488.93H1544.5M1590.5 488.93H1596.5M320.5 386.79H1544.5M1590.5 386.79H1596.5M320.5 284.64H1544.5M1590.5 284.64H1596.5" fill="none" stroke="#000" stroke-opacity=".105" stroke-width="1"/>
<text transform="translate(272.3 899.8) scale(0.942 1)" text-anchor="end" fill="#3c3c3c">0</text>
<text transform="translate(1552.2 899.8) scale(0.942 1)" text-anchor="start" fill="#3c3c3c">0</text>
<text transform="translate(272.3 828.3) scale(0.942 1)" text-anchor="end" fill="#3c3c3c">5</text>
<text transform="translate(1552.2 828.3) scale(0.942 1)" text-anchor="start" fill="#3c3c3c">100</text>
<text transform="translate(272.3 756.8) scale(0.942 1)" text-anchor="end" fill="#3c3c3c">10</text>
<text transform="translate(1552.2 756.8) scale(0.942 1)" text-anchor="start" fill="#3c3c3c">200</text>
<text transform="translate(272.3 685.3) scale(0.942 1)" text-anchor="end" fill="#3c3c3c">15</text>
<text transform="translate(1552.2 685.3) scale(0.942 1)" text-anchor="start" fill="#3c3c3c">300</text>
<text transform="translate(272.3 613.8) scale(0.942 1)" text-anchor="end" fill="#3c3c3c">20</text>
<text transform="translate(1552.2 613.8) scale(0.942 1)" text-anchor="start" fill="#3c3c3c">400</text>
<text transform="translate(272.3 542.3) scale(0.942 1)" text-anchor="end" fill="#3c3c3c">25</text>
<text transform="translate(1552.2 542.3) scale(0.942 1)" text-anchor="start" fill="#3c3c3c">500</text>
<text transform="translate(272.3 470.8) scale(0.942 1)" text-anchor="end" fill="#3c3c3c">30</text>
<text transform="translate(1552.2 470.8) scale(0.942 1)" text-anchor="start" fill="#3c3c3c">600</text>
<text transform="translate(272.3 399.3) scale(0.942 1)" text-anchor="end" fill="#3c3c3c">35</text>
<text transform="translate(1552.2 399.3) scale(0.942 1)" text-anchor="start" fill="#3c3c3c">700</text>
<text transform="translate(272.3 327.8) scale(0.942 1)" text-anchor="end" fill="#3c3c3c">40</text>
<text transform="translate(1552.2 327.8) scale(0.942 1)" text-anchor="start" fill="#3c3c3c">800</text>
<text transform="translate(272.3 256.3) scale(0.942 1)" text-anchor="end" fill="#3c3c3c">45</text>
<text transform="translate(1552.2 256.3) scale(0.942 1)" text-anchor="start" fill="#3c3c3c">900</text>
<text transform="translate(272.3 185.4) scale(0.942 1)" text-anchor="end" fill="#3c3c3c">50</text>
<text transform="translate(1552.2 185.4) scale(0.942 1)" text-anchor="start" fill="#3c3c3c">1,000</text>
<text transform="translate(312.3 899.8) scale(0.942 1)" text-anchor="end" fill="#3c3c3c">0</text>
<text transform="translate(312.3 769.8) scale(0.942 1)" text-anchor="end" fill="#3c3c3c">20</text>
<text transform="translate(312.3 639.8) scale(0.942 1)" text-anchor="end" fill="#3c3c3c">40</text>
<text transform="translate(312.3 509.8) scale(0.942 1)" text-anchor="end" fill="#3c3c3c">60</text>
<text transform="translate(312.3 379.8) scale(0.942 1)" text-anchor="end" fill="#3c3c3c">80</text>
<text transform="translate(312.3 249.8) scale(0.942 1)" text-anchor="end" fill="#3c3c3c">100</text>
<text transform="translate(312.3 185.4) scale(0.942 1)" text-anchor="end" fill="#3c3c3c">110</text>
<text transform="translate(1598.6 899.8) scale(0.942 1)" text-anchor="start" fill="#3c3c3c">0</text>
<text transform="translate(1598.6 797.7) scale(0.942 1)" text-anchor="start" fill="#3c3c3c">2</text>
<text transform="translate(1598.6 695.5) scale(0.942 1)" text-anchor="start" fill="#3c3c3c">4</text>
<text transform="translate(1598.6 593.4) scale(0.942 1)" text-anchor="start" fill="#3c3c3c">6</text>
<text transform="translate(1598.6 491.2) scale(0.942 1)" text-anchor="start" fill="#3c3c3c">8</text>
<text transform="translate(1598.6 389.1) scale(0.942 1)" text-anchor="start" fill="#3c3c3c">10</text>
<text transform="translate(1598.6 286.9) scale(0.942 1)" text-anchor="start" fill="#3c3c3c">12</text>
<text transform="translate(1598.6 185.4) scale(0.942 1)" text-anchor="start" fill="#3c3c3c">14</text>
<text transform="translate(323.1 910.6) rotate(-50) scale(0.942 1)" text-anchor="end" fill="#3c3c3c">0</text>
<text transform="translate(363.2 910.6) rotate(-50) scale(0.942 1)" text-anchor="end" fill="#3c3c3c">7</text>
<text transform="translate(403.4 910.6) rotate(-50) scale(0.942 1)" text-anchor="end" fill="#3c3c3c">13</text>
<text transform="translate(443.5 910.6) rotate(-50) scale(0.942 1)" text-anchor="end" fill="#3c3c3c">20</text>
<text transform="translate(483.6 910.6) rotate(-50) scale(0.942 1)" text-anchor="end" fill="#3c3c3c">26</text>
<text transform="translate(523.8 910.6) rotate(-50) scale(0.942 1)" text-anchor="end" fill="#3c3c3c">33</text>
<text transform="translate(563.9 910.6) rotate(-50) scale(0.942 1)" text-anchor="end" fill="#3c3c3c">40</text>
<text transform="translate(604.0 910.6) rotate(-50) scale(0.942 1)" text-anchor="end" fill="#3c3c3c">46</text>
<text transform="translate(644.2 910.6) rotate(-50) scale(0.942 1)" text-anchor="end" fill="#3c3c3c">53</text>
<text transform="translate(684.3 910.6) rotate(-50) scale(0.942 1)" text-anchor="end" fill="#3c3c3c">59</text>
<text transform="translate(724.4 910.6) rotate(-50) scale(0.942 1)" text-anchor="end" fill="#3c3c3c">66</text>
<text transform="translate(764.6 910.6) rotate(-50) scale(0.942 1)" text-anchor="end" fill="#3c3c3c">73</text>
<text transform="translate(804.7 910.6) rotate(-50) scale(0.942 1)" text-anchor="end" fill="#3c3c3c">79</text>
<text transform="translate(844.8 910.6) rotate(-50) scale(0.942 1)" text-anchor="end" fill="#3c3c3c">86</text>
<text transform="translate(885.0 910.6) rotate(-50) scale(0.942 1)" text-anchor="end" fill="#3c3c3c">92</text>
<text transform="translate(925.1 910.6) rotate(-50) scale(0.942 1)" text-anchor="end" fill="#3c3c3c">99</text>
<text transform="translate(965.2 910.6) rotate(-50) scale(0.942 1)" text-anchor="end" fill="#3c3c3c">105</text>
<text transform="translate(1005.4 910.6) rotate(-50) scale(0.942 1)" text-anchor="end" fill="#3c3c3c">112</text>
<text transform="translate(1045.5 910.6) rotate(-50) scale(0.942 1)" text-anchor="end" fill="#3c3c3c">119</text>
<text transform="translate(1085.6 910.6) rotate(-50) scale(0.942 1)" text-anchor="end" fill="#3c3c3c">125</text>
<text transform="translate(1125.8 910.6) rotate(-50) scale(0.942 1)" text-anchor="end" fill="#3c3c3c">132</text>
<text transform="translate(1165.9 910.6) rotate(-50) scale(0.942 1)" text-anchor="end" fill="#3c3c3c">138</text>
<text transform="translate(1206.0 910.6) rotate(-50) scale(0.942 1)" text-anchor="end" fill="#3c3c3c">145</text>
<text transform="translate(1246.2 910.6) rotate(-50) scale(0.942 1)" text-anchor="end" fill="#3c3c3c">152</text>
<text transform="translate(1286.3 910.6) rotate(-50) scale(0.942 1)" text-anchor="end" fill="#3c3c3c">158</text>
<text transform="translate(1326.4 910.6) rotate(-50) scale(0.942 1)" text-anchor="end" fill="#3c3c3c">165</text>
<text transform="translate(1366.6 910.6) rotate(-50) scale(0.942 1)" text-anchor="end" fill="#3c3c3c">171</text>
<text transform="translate(1406.7 910.6) rotate(-50) scale(0.942 1)" text-anchor="end" fill="#3c3c3c">178</text>
<text transform="translate(1446.8 910.6) rotate(-50) scale(0.942 1)" text-anchor="end" fill="#3c3c3c">185</text>
<text transform="translate(1487.0 910.6) rotate(-50) scale(0.942 1)" text-anchor="end" fill="#3c3c3c">191</text>
<text transform="translate(1527.1 910.6) rotate(-50) scale(0.942 1)" text-anchor="end" fill="#3c3c3c">198</text>
<text transform="translate(932.0 935.3) scale(0.942 1)" text-anchor="middle" fill="#3c3c3c">Culture time [h]</text>
<text transform="translate(255.6 540.0) rotate(-90) scale(0.942 1)" text-anchor="middle" fill="#ffa500">T [°C]</text>
<text transform="translate(290.9 540.0) rotate(-90) scale(0.942 1)" text-anchor="middle" fill="#0000ff">DO [%DO]</text>
<text transform="translate(1579.6 540.0) rotate(90) scale(0.942 1)" text-anchor="middle" fill="#8b8000">IQFlow O2 [mlh]</text>
<text transform="translate(1615.3 540.0) rotate(90) scale(0.942 1)" text-anchor="middle" fill="#ff0000">pH [-log(H+)]</text>
<path d="M320.3 428.5L321.8 389.0L324.0 365.0L327.4 311.6L329.5 308.8L331.2 335.1L332.6 340.6L335.4 345.8L337.1 314.4L339.2 304.3L340.9 314.7L343.0 311.9L344.9 304.3L347.1 306.7L348.9 315.0L350.6 319.5L352.3 316.1L354.4 319.2L356.3 311.6L360.3 313.3L362.3 313.7L365.4 316.4L368.6 318.3L370.3 317.8L371.7 315.4L373.7 324.0L375.3 353.7L377.2 337.2L379.3 332.3L382.7 329.2L388.3 327.5L396.5 325.8L403.5 325.8L406.2 326.6L409.7 326.0L411.8 326.5L415.0 325.9L417.7 326.2L420.3 326.4L423.0 326.8L425.7 327.1L428.3 327.0L431.0 327.3L433.6 328.1L436.2 327.9L438.8 328.1L441.5 328.8L444.1 328.7L446.7 329.1L449.3 329.1L451.9 329.4L454.5 329.3L457.2 329.8L459.8 330.2L462.4 330.2L465.0 330.6L467.5 330.5L470.0 330.0L472.5 330.5L475.0 330.3L477.5 330.1L480.0 329.9L482.5 330.7L485.0 330.6L487.5 331.0L490.0 331.3L492.5 331.3L495.0 331.7L497.5 331.5L500.0 332.0L502.5 332.0L505.0 332.5L507.5 332.7L510.0 332.3L512.5 332.5L515.0 332.8L517.5 333.4L520.0 333.1L522.5 333.3L525.0 333.1L527.5 333.4L530.0 333.3L532.5 333.4L535.0 333.6L537.5 333.7L540.0 334.0L542.5 333.9L545.0 334.1L547.5 334.2L550.0 334.3L552.5 334.2L555.0 333.9L557.5 334.4L560.0 334.6L562.5 334.6L565.0 334.4L567.5 334.6L570.0 334.2L572.5 334.7L575.0 334.5L577.5 334.3L580.0 334.1L582.5 334.7L585.0 334.8L587.5 334.2L590.0 334.7L592.5 334.4L595.0 334.3L597.5 334.4L600.0 334.7L602.5 334.8L605.0 334.2L607.5 334.6L610.0 334.2L612.5 334.7L615.0 334.5L617.5 334.9L620.0 334.9L622.6 334.6L625.1 335.0L627.7 334.6L630.2 334.5L632.8 334.9L635.3 334.5L637.9 334.7L640.4 334.9L643.0 335.1L645.6 334.8L648.1 334.8L650.7 335.4L653.2 335.0L655.8 335.5L658.3 335.5L660.9 335.2L663.4 335.3L666.0 335.4L668.6 335.5L671.2 335.4L673.8 335.3L676.5 335.4L679.1 335.6L681.7 335.2L684.3 335.1L686.9 335.3L689.5 334.9L692.2 335.0L694.8 335.4L697.4 335.0L700.0 335.0L702.5 334.7L705.0 335.0L707.5 335.1L710.0 334.7L712.5 335.1L715.0 335.1L717.5 334.8L720.0 335.2L722.5 335.1L725.0 335.2L727.5 335.0L730.0 335.2L732.5 335.3L735.0 334.8L737.5 334.8L740.0 335.3L742.5 335.5L745.0 335.0L747.5 335.1L750.0 335.2L752.5 335.0L755.0 335.1L757.5 335.1L760.0 335.1L762.5 335.2L765.0 334.9L767.5 334.9L770.0 335.1L772.5 334.6L775.0 334.9L777.5 334.9L780.0 334.6L782.5 334.4L785.0 334.8L787.5 334.3L790.0 334.2L792.5 334.3L795.0 334.5L797.5 334.0L800.0 334.1L802.5 334.1L805.0 334.5L807.5 334.3L810.0 334.6L812.5 334.2L815.0 334.3L817.5 334.6L820.0 334.8L822.5 334.5L825.0 334.4L827.5 334.4L830.0 334.7L832.5 334.5L835.0 335.0L837.5 335.0L840.0 334.6L842.5 334.7L845.0 335.1L847.5 335.1L850.0 335.2L852.5 335.1L855.0 335.2L857.5 335.6L860.0 336.2L862.5 336.0L865.0 336.3L867.5 336.6L870.0 336.9L872.5 337.1L875.0 337.7L877.5 337.2L880.0 337.1L882.5 337.8L885.0 337.7L887.5 337.8L890.0 337.5L892.5 337.9L895.0 337.9L897.5 337.4L900.0 337.8L902.5 337.9L905.0 337.8L907.5 337.7L910.0 337.5L912.5 337.6L915.0 337.5L917.5 337.4L920.0 337.8L922.5 337.6L925.0 338.0L927.5 337.5L930.0 338.1L932.5 338.0L935.0 338.2L937.5 338.2L940.0 338.2L942.5 338.0L945.0 337.6L947.5 338.2L950.0 337.8L952.5 338.1L955.0 338.5L957.5 338.6L960.0 338.7L962.5 339.3L965.0 339.3L967.5 339.3L970.0 339.4L972.5 340.1L975.0 340.0L977.5 340.4L980.0 340.2L982.5 340.3L985.0 340.7L987.5 341.0L990.0 340.7L992.5 341.3L995.0 341.6L997.5 341.7L1000.0 341.8L1002.5 341.4L1005.0 342.0L1007.5 342.3L1010.0 341.9L1012.5 342.1L1015.0 342.3L1017.5 342.6L1020.0 342.7L1022.5 342.9L1025.0 343.2L1027.5 342.8L1030.0 343.0L1032.5 343.0L1035.0 342.9L1037.5 342.7L1040.0 343.3L1042.5 343.1L1045.0 342.5L1047.5 342.7L1050.0 342.5L1052.5 342.5L1055.0 342.5L1057.5 342.8L1060.0 342.7L1062.5 342.6L1065.0 342.5L1067.5 342.6L1070.0 342.5L1072.5 342.8L1075.0 343.0L1077.5 342.7L1080.0 342.5L1082.5 342.6L1085.0 342.7L1087.5 342.9L1090.0 343.0L1092.5 342.7L1095.1 343.0L1097.6 342.9L1100.1 342.8L1102.6 342.7L1105.1 342.8L1107.6 342.9L1110.1 342.7L1112.6 342.8L1113.2 343.2L1115.3 312.6L1117.4 314.0L1119.4 303.6L1121.5 300.8L1127.1 324.4L1131.3 303.6L1133.0 301.5L1136.4 321.7L1138.9 321.0L1142.4 300.8L1144.4 304.3L1147.9 323.8L1150.3 321.0L1153.9 300.8L1156.0 305.7L1159.7 323.8L1161.8 321.0L1165.3 300.8L1167.6 306.4L1170.8 322.4L1173.2 321.0L1176.7 301.5L1179.2 302.9L1182.6 323.0L1184.7 320.3L1188.6 299.4L1194.4 324.4L1197.9 298.8L1202.1 321.0L1203.9 322.4L1207.2 299.4L1209.7 305.0L1213.2 323.8L1219.0 299.4L1224.6 324.4L1228.5 302.9L1230.6 301.5L1234.0 321.0L1236.8 322.4L1240.0 300.8L1245.8 324.4L1249.3 301.5L1251.7 305.0L1253.5 317.2L1255.6 317.2L1259.3 300.8L1263.2 324.4L1268.8 300.1L1272.6 325.8L1276.1 302.9L1278.5 304.3L1282.4 325.1L1286.1 300.1L1291.7 324.4L1295.6 299.4L1299.3 322.4L1301.4 321.0L1305.6 300.1L1308.8 325.8L1312.5 303.6L1315.0 302.9L1318.3 326.5L1322.5 300.1L1325.7 321.0L1328.5 322.4L1331.8 300.7L1335.5 320.8L1343.1 304.2L1345.2 304.6L1348.0 309.7L1351.4 320.1L1354.9 324.5L1357.0 321.5L1361.1 307.0L1363.9 304.6L1366.2 305.6L1370.1 314.6L1372.8 322.2L1375.6 324.2L1377.7 322.2L1381.8 311.8L1385.3 303.9L1388.7 308.3L1392.9 320.1L1396.3 324.9L1398.4 322.2L1403.3 308.3L1406.7 304.6L1409.5 307.0L1412.9 313.9L1416.4 322.2L1418.5 324.5L1421.2 322.2L1426.1 311.1L1429.5 304.2L1431.6 303.2L1435.0 306.3L1440.6 318.0L1445.4 324.5L1448.2 322.2L1452.3 311.1L1455.8 304.6L1457.9 304.2L1462.7 311.1L1467.5 322.2L1470.7 324.5L1473.7 321.5L1478.6 309.7L1482.0 304.2L1484.8 304.6L1488.3 311.1L1492.4 321.5L1495.2 324.5L1496.8 322.8L1497.9 318.0L1499.3 322.8L1502.8 342.2L1506.9 358.8L1512.4 374.0L1518.0 385.0L1524.9 394.7L1530.4 400.3L1537.3 405.8L1544.0 409.5" fill="none" stroke="#0a0aff" stroke-width="1.6" stroke-linejoin="round"/>
<path d="M319.9 468.3L321.7 479.0L323.4 472.8L328.3 470.5L333.7 468.3L340.1 468.2L346.5 468.1L353.0 468.0L359.4 467.8L368.3 468.3L377.2 468.4L383.5 468.6L389.8 468.8L396.1 468.7L402.4 468.8L408.7 468.5L415.0 468.7L421.1 468.6L427.1 468.7L433.2 468.7L439.3 468.5L445.4 468.6L451.4 468.6L457.5 468.8L463.6 468.7L469.6 468.5L475.7 468.7L481.8 468.5L487.9 468.7L493.9 468.5L500.0 468.4L506.0 468.7L512.0 468.4L518.0 468.4L524.0 468.6L530.0 468.6L536.0 468.3L542.0 468.6L548.0 468.4L554.0 468.4L560.0 468.2L566.1 468.5L572.2 468.4L578.3 468.5L584.3 468.5L590.4 468.3L596.5 468.3L602.6 468.2L608.7 468.2L614.8 468.2L620.9 468.3L627.0 468.4L633.0 468.2L639.1 468.5L645.2 468.4L651.3 468.4L657.4 468.6L663.5 468.4L669.6 468.4L675.7 468.5L681.7 468.5L687.8 468.3L693.9 468.7L700.0 468.3L706.2 468.6L712.5 468.6L718.8 468.3L725.0 468.5L731.2 468.3L737.5 468.4L743.8 468.2L750.0 468.1L756.2 468.2L762.5 468.4L768.8 468.1L775.0 468.3L781.1 468.4L787.2 468.4L793.3 468.2L799.4 468.2L805.6 468.3L811.7 468.4L817.8 468.2L823.9 468.5L830.0 468.5L836.3 468.5L842.7 468.2L849.0 468.5L855.3 468.2L861.7 468.3L868.0 468.4L874.3 468.5L880.7 468.2L887.0 468.4L893.3 468.3L899.7 468.2L906.0 468.2L912.3 468.1L918.7 468.1L925.0 468.1L931.2 468.3L937.5 468.4L943.8 468.2L950.0 468.1L956.2 468.5L962.5 468.4L968.8 468.3L975.0 468.3L981.2 468.5L987.5 468.6L993.8 468.5L1000.0 468.5L1006.2 468.3L1012.5 468.6L1018.8 468.3L1025.0 468.5L1031.2 468.6L1037.5 468.3L1043.8 468.5L1050.0 468.6L1056.2 468.5L1062.5 468.5L1068.8 468.3L1075.0 468.4L1081.2 468.3L1087.5 468.5L1093.8 468.3L1100.0 468.4L1106.2 468.6L1112.5 468.5L1118.8 468.5L1125.0 468.4L1131.2 468.4L1137.5 468.4L1143.8 468.3L1150.0 468.3L1156.2 468.3L1162.5 468.2L1168.8 468.3L1175.0 468.5L1181.2 468.5L1187.5 468.4L1193.8 468.3L1200.0 468.2L1206.2 468.2L1212.5 468.2L1218.8 468.4L1225.0 468.5L1231.2 468.3L1237.5 468.5L1243.8 468.5L1250.0 468.5L1256.2 468.5L1262.5 468.5L1268.8 468.4L1275.0 468.5L1281.2 468.4L1287.5 468.5L1293.8 468.6L1300.0 468.6L1306.0 468.4L1312.0 468.6L1318.0 468.4L1324.0 468.3L1330.0 468.1L1336.0 468.2L1342.0 468.1L1348.0 468.2L1354.0 468.1L1360.0 468.1L1366.0 468.0L1372.0 468.1L1378.0 467.8L1385.3 468.2L1392.7 468.4L1400.0 468.7L1406.2 468.5L1412.5 468.7L1418.8 468.7L1425.0 468.6L1431.2 468.6L1437.5 468.6L1443.8 468.4L1450.0 468.4L1456.2 468.3L1462.5 468.5L1468.8 468.5L1475.0 468.3L1481.2 468.3L1487.5 468.3L1493.8 468.3L1500.0 468.1L1506.3 468.3L1512.6 468.3L1518.9 468.3L1525.1 468.3L1531.4 468.4L1537.7 468.5L1544.0 468.4" fill="none" stroke="#ffa500" stroke-width="1.6" stroke-linejoin="round"/>
<path d="M319.9 539.4L321.7 527.0L323.9 521.6L325.7 510.0L327.9 515.4L329.7 515.4L331.4 513.6L335.4 514.6L337.6 514.5L339.8 514.8L342.1 514.5L344.3 514.7L346.5 514.6L348.7 514.5L351.0 514.7L353.2 514.4L355.4 514.7L357.6 514.5L359.9 514.5L362.1 514.7L364.3 514.9L366.5 514.5L368.8 514.6L371.0 514.8L373.2 515.0L375.4 514.8L377.7 514.7L379.9 515.0L382.1 514.5L384.3 515.0L386.6 514.6L388.8 514.6L391.0 514.5L393.2 514.7L395.5 515.0L397.7 514.6L399.9 514.8L402.1 514.9L404.4 514.7L406.6 514.8L408.8 514.5L411.0 514.5L413.3 514.6L415.5 514.9L417.7 514.8L419.9 514.7L422.1 514.9L424.4 514.8L426.6 514.7L428.8 515.0L431.0 514.9L433.3 514.7L435.5 514.9L437.7 514.8L439.9 515.1L442.2 515.0L444.4 514.7L446.6 515.1L448.8 514.6L451.1 514.8L453.3 515.0L455.5 514.6L457.7 514.8L460.0 514.6L462.2 515.0L464.4 515.0L466.6 514.9L468.9 515.1L471.1 514.8L473.3 515.0L475.5 514.9L477.8 514.9L480.0 514.8L482.2 515.1L484.4 515.1L486.7 514.9L488.9 515.0L491.1 514.6L493.3 515.0L495.6 515.0L497.8 515.2L500.0 515.1L502.2 514.8L504.4 514.8L506.6 515.0L508.8 514.6L511.0 514.9L513.2 514.7L515.4 514.7L517.6 514.6L519.9 515.0L522.1 514.7L524.3 514.7L526.5 514.8L528.7 515.1L530.9 514.6L533.1 514.8L535.3 514.9L537.5 515.1L539.7 515.1L541.9 515.1L544.1 514.7L546.3 514.8L548.5 514.8L550.7 515.1L552.9 515.1L555.1 514.7L557.4 514.7L559.6 514.7L561.8 514.7L564.0 514.8L566.2 514.9L568.4 514.7L570.6 514.6L572.8 514.8L575.0 514.8L577.2 514.9L579.4 515.1L581.6 515.0L583.8 514.9L586.0 514.9L588.2 514.9L590.4 514.6L592.6 515.1L594.9 515.0L597.1 515.1L599.3 515.0L601.5 514.8L603.7 514.8L605.9 514.6L608.1 514.9L610.3 514.6L612.5 514.6L614.7 514.6L616.9 514.6L619.1 514.7L621.3 514.6L623.5 514.5L625.7 514.6L627.9 514.6L630.1 514.7L632.4 514.5L634.6 515.0L636.8 514.9L639.0 514.6L641.2 514.7L643.4 514.7L645.6 514.7L647.8 514.6L650.0 515.0L652.2 515.1L654.4 514.8L656.6 514.8L658.8 514.5L661.0 514.6L663.2 514.7L665.4 514.6L667.6 515.0L669.9 514.6L672.1 514.5L674.3 515.1L676.5 514.8L678.7 514.6L680.9 514.8L683.1 514.5L685.3 514.8L687.5 515.1L689.7 515.0L691.9 514.9L694.1 514.6L696.3 514.7L698.5 514.6L700.7 514.9L702.9 514.8L705.1 514.9L707.4 514.7L709.6 514.6L711.8 514.9L714.0 515.0L716.2 515.0L718.4 514.9L720.6 514.9L722.8 514.9L725.0 514.6L727.2 514.8L729.4 514.7L731.6 514.5L733.8 514.5L736.0 514.6L738.2 514.6L740.4 514.9L742.6 515.0L744.9 514.7L747.1 515.0L749.3 515.0L751.5 515.0L753.7 514.6L755.9 514.6L758.1 514.6L760.3 514.5L762.5 514.5L764.7 514.8L766.9 515.0L769.1 514.9L771.3 514.7L773.5 514.8L775.7 514.9L777.9 514.5L780.1 514.8L782.4 515.0L784.6 514.9L786.8 514.9L789.0 514.7L791.2 514.5L793.4 514.9L795.6 514.6L797.8 514.9L800.0 515.0L802.2 514.6L804.4 514.6L806.6 515.0L808.8 514.8L811.0 514.5L813.2 514.5L815.4 514.5L817.6 514.9L819.9 514.9L822.1 514.5L824.3 514.9L826.5 515.0L828.7 514.8L830.9 514.6L833.1 514.7L835.3 514.5L837.5 514.4L839.7 515.0L841.9 514.8L844.1 514.7L846.3 515.0L848.5 514.7L850.7 514.9L852.9 514.9L855.1 514.5L857.4 514.6L859.6 514.6L861.8 514.6L864.0 514.8L866.2 514.6L868.4 514.7L870.6 514.5L872.8 515.0L875.0 514.6L877.2 514.7L879.4 514.8L881.6 515.0L883.8 514.7L886.0 515.0L888.2 514.7L890.4 514.7L892.6 514.7L894.9 514.4L897.1 514.7L899.3 514.5L901.5 514.4L903.7 514.9L905.9 514.5L908.1 514.7L910.3 514.9L912.5 514.8L914.7 514.6L916.9 514.7L919.1 514.8L921.3 514.9L923.5 514.5L925.7 514.8L927.9 514.6L930.1 514.6L932.4 514.9L934.6 514.7L936.8 514.8L939.0 514.9L941.2 515.0L943.4 514.7L945.6 514.8L947.8 514.8L950.0 514.8L952.2 514.9L954.4 514.7L956.6 514.8L958.8 514.7L961.0 515.0L963.2 514.9L965.4 515.0L967.6 515.0L969.9 514.6L972.1 514.8L974.3 515.0L976.5 515.0L978.7 514.5L980.9 514.5L983.1 514.7L985.3 514.5L987.5 514.6L989.7 514.5L991.9 514.9L994.1 514.9L996.3 515.0L998.5 514.6L1000.7 514.9L1002.9 514.9L1005.1 514.6L1007.4 515.0L1009.6 515.1L1011.8 514.6L1014.0 515.0L1016.2 514.7L1018.4 514.8L1020.6 515.1L1022.8 515.0L1025.0 514.6L1027.2 514.7L1029.4 514.8L1031.6 514.7L1033.8 514.6L1036.0 514.7L1038.2 514.9L1040.4 514.5L1042.6 514.8L1044.9 514.7L1047.1 514.5L1049.3 514.7L1051.5 514.9L1053.7 514.8L1055.9 514.5L1058.1 515.1L1060.3 515.0L1062.5 515.1L1064.7 514.6L1066.9 514.6L1069.1 514.5L1071.3 515.0L1073.5 514.7L1075.7 514.6L1077.9 514.7L1080.1 515.0L1082.4 515.0L1084.6 514.7L1086.8 514.6L1089.0 515.0L1091.2 514.8L1093.4 514.9L1095.6 514.6L1097.8 514.5L1100.0 514.9L1102.2 514.8L1104.4 514.5L1106.7 515.1L1108.9 514.9L1111.1 515.0L1113.3 514.5L1115.6 515.0L1117.8 514.5L1120.0 515.0L1122.2 514.8L1124.4 514.7L1126.7 514.8L1128.9 515.0L1131.1 514.6L1133.3 514.5L1135.6 514.8L1137.8 514.6L1140.0 514.5L1142.2 514.6L1144.4 514.5L1146.7 514.6L1148.9 514.6L1151.1 514.6L1153.3 514.9L1155.6 514.6L1157.8 514.7L1160.0 514.5L1162.2 514.6L1164.4 514.4L1166.7 514.6L1168.9 514.4L1171.1 514.9L1173.3 514.8L1175.6 514.5L1177.8 514.7L1180.0 515.0L1182.2 514.5L1184.4 514.9L1186.7 514.7L1188.9 514.7L1191.1 514.9L1193.3 514.6L1195.6 514.7L1197.8 514.8L1200.0 515.0L1202.2 514.6L1204.4 514.9L1206.7 514.8L1208.9 514.8L1211.1 514.6L1213.3 514.6L1215.6 514.4L1217.8 514.5L1220.0 514.4L1222.2 514.8L1224.4 514.5L1226.7 514.5L1228.9 514.4L1231.1 514.9L1233.3 514.9L1235.6 514.8L1237.8 514.5L1240.0 514.5L1242.2 514.5L1244.4 514.6L1246.7 514.4L1248.9 514.6L1251.1 514.5L1253.3 514.9L1255.6 514.9L1257.8 514.7L1260.0 514.5L1262.2 514.9L1264.4 514.5L1266.7 514.5L1268.9 514.3L1271.1 514.6L1273.3 514.6L1275.6 514.6L1277.8 514.4L1280.0 514.6L1282.2 514.3L1284.4 514.5L1286.7 514.4L1288.9 514.6L1291.1 514.3L1293.3 514.3L1295.6 514.5L1297.8 514.4L1300.0 514.7L1302.2 514.6L1304.4 514.8L1306.7 514.7L1308.9 514.7L1311.1 514.8L1313.3 514.5L1315.6 514.5L1317.8 514.9L1320.0 514.4L1322.2 514.7L1324.4 514.7L1326.7 514.3L1328.9 514.8L1331.1 514.8L1333.3 514.7L1335.6 514.7L1337.8 514.8L1340.0 514.4L1342.2 514.6L1344.4 514.6L1346.7 514.8L1348.9 514.8L1351.1 514.8L1353.3 514.7L1355.6 514.8L1357.8 514.7L1360.0 514.7L1362.2 514.4L1364.4 514.3L1366.7 514.4L1368.9 514.5L1371.1 514.4L1373.3 514.8L1375.6 514.6L1377.8 514.7L1380.0 514.7L1382.2 514.7L1384.4 514.6L1386.7 514.3L1388.9 514.8L1391.1 514.7L1393.3 514.6L1395.6 514.6L1397.8 514.7L1400.0 514.3L1402.2 514.7L1404.4 514.5L1406.7 514.3L1408.9 514.5L1411.1 514.7L1413.3 514.4L1415.6 514.7L1417.8 514.9L1420.0 514.6L1422.2 514.5L1424.4 514.6L1426.7 514.7L1428.9 514.8L1431.1 514.7L1433.3 514.7L1435.6 514.3L1437.8 514.4L1440.0 514.5L1442.2 514.7L1444.4 514.5L1446.7 514.6L1448.9 514.3L1451.1 514.3L1453.3 514.5L1455.6 514.7L1457.8 514.7L1460.0 514.7L1462.2 514.5L1464.4 514.6L1466.7 514.6L1468.9 514.6L1471.1 514.4L1473.3 514.8L1475.6 514.4L1477.8 514.9L1480.0 514.9L1482.2 514.4L1484.4 514.7L1486.7 515.0L1488.9 515.1L1491.1 514.8L1493.3 514.8L1495.6 514.8L1497.8 515.3L1500.0 514.9L1502.2 515.2L1504.4 514.9L1506.6 515.2L1508.8 515.5L1511.0 515.0L1513.2 515.4L1515.4 515.2L1517.6 515.5L1519.8 515.4L1522.0 515.1L1524.2 515.6L1526.4 515.3L1528.6 515.1L1530.8 515.1L1533.0 515.4L1535.2 515.4L1537.4 515.3L1539.6 515.2L1541.8 515.4L1544.0 515.5" fill="none" stroke="#ff0a0a" stroke-width="1.6" stroke-linejoin="round"/>
<path d="M320.3 897.4L325.5 897.4L327.6 895.8L329.4 897.4L335.0 897.4L337.4 896.0L339.0 895.6L340.5 896.6L342.8 893.8L345.0 896.0L346.3 897.4L350.3 897.4L351.8 894.6L353.0 895.2L355.0 895.4L358.3 893.5L371.6 893.5L373.6 897.4L1115.4 897.4L1116.8 893.6L1118.6 895.6L1120.2 897.4L1124.1 897.4L1125.7 895.2L1127.1 893.7L1128.9 893.7L1130.5 895.2L1132.1 897.4L1135.5 897.4L1137.1 895.2L1138.5 893.7L1140.3 893.7L1141.9 895.2L1143.5 897.4L1146.8 897.4L1148.4 895.2L1149.8 893.7L1151.6 893.7L1153.2 895.2L1154.8 897.4L1158.1 897.4L1159.7 895.2L1161.1 893.7L1162.9 893.7L1164.5 895.2L1166.1 897.4L1169.5 897.4L1171.1 895.2L1172.5 893.7L1174.3 893.7L1175.9 895.2L1177.5 897.4L1180.8 897.4L1182.4 895.2L1183.8 893.7L1185.6 893.7L1187.2 895.2L1188.8 897.4L1191.5 897.4L1193.1 895.2L1194.5 893.7L1196.3 893.7L1197.9 895.2L1199.5 897.4L1199.4 897.4L1200.8 893.2L1203.4 893.6L1205.0 895.3L1206.8 897.4L1210.8 897.4L1212.4 895.2L1213.8 893.7L1215.6 893.7L1217.2 895.2L1218.8 897.4L1221.5 897.4L1223.1 895.2L1224.5 893.7L1226.3 893.7L1227.9 895.2L1229.5 897.4L1232.8 897.4L1234.4 895.2L1235.8 893.7L1237.6 893.7L1239.2 895.2L1240.8 897.4L1243.4 897.4L1244.8 895.2L1246.0 893.7L1247.5 893.7L1248.9 895.2L1250.2 897.4L1252.7 897.4L1254.1 895.2L1255.3 893.7L1256.8 893.7L1258.2 895.2L1259.5 897.4L1261.4 897.4L1262.8 895.2L1264.0 893.7L1265.5 893.7L1266.9 895.2L1268.2 897.4L1270.1 897.4L1271.5 895.2L1272.7 893.7L1274.2 893.7L1275.6 895.2L1276.9 897.4L1279.4 897.4L1280.8 895.2L1282.0 893.7L1283.5 893.7L1284.9 895.2L1286.2 897.4L1288.7 897.4L1290.1 895.2L1291.3 893.7L1292.8 893.7L1294.2 895.2L1295.5 897.4L1297.4 897.4L1298.8 895.2L1300.0 893.7L1301.5 893.7L1302.9 895.2L1304.2 897.4L1306.7 897.4L1308.1 895.2L1309.3 893.7L1310.8 893.7L1312.2 895.2L1313.5 897.4L1316.1 897.4L1317.5 895.2L1318.7 893.7L1320.2 893.7L1321.6 895.2L1322.9 897.4L1324.0 897.4L1325.2 895.0L1326.2 893.5L1330.0 893.5L1331.0 895.2L1332.0 897.4L1334.0 897.4L1335.3 895.6L1336.8 897.4L1343.3 897.4L1346.0 895.4L1348.7 894.0L1353.0 893.7L1355.0 893.1L1356.6 894.6L1358.7 897.4L1364.7 897.4L1367.1 895.0L1368.7 893.5L1376.7 893.5L1378.1 895.6L1380.0 897.4L1385.3 897.4L1387.7 895.0L1389.3 893.5L1396.7 893.5L1398.1 895.6L1400.0 897.4L1406.7 897.4L1409.0 895.0L1410.7 893.5L1416.3 893.5L1418.0 895.6L1419.3 893.6L1421.2 895.6L1423.3 897.4L1431.3 897.4L1434.6 895.0L1436.7 893.5L1446.0 893.5L1447.8 895.6L1450.0 897.4L1456.7 897.4L1459.6 895.0L1461.3 893.5L1471.3 893.5L1473.1 895.6L1475.3 897.4L1482.0 897.4L1484.9 895.0L1486.7 893.5L1494.7 893.5L1496.1 895.6L1498.0 897.4L1544.0 897.4" fill="none" stroke="#968a12" stroke-width="1.4" stroke-linejoin="round"/>
<rect x="1632" y="421.10" width="29.8" height="9.8" fill="#0000ff"/>
<text transform="translate(1665.2 428.70) scale(0.942 1)" fill="#3c3c3c">DO [%DO]</text>
<rect x="1632" y="436.59" width="29.8" height="9.8" fill="#8b0000"/>
<text transform="translate(1665.2 444.19) scale(0.942 1)" fill="#3c3c3c" text-decoration="line-through">N [rpm]</text>
<rect x="1632" y="452.08" width="29.8" height="9.8" fill="#808080"/>
<text transform="translate(1665.2 459.68) scale(0.942 1)" fill="#3c3c3c" text-decoration="line-through">valve1</text>
<rect x="1632" y="467.57" width="29.8" height="9.8" fill="#ffa500"/>
<text transform="translate(1665.2 475.17) scale(0.942 1)" fill="#3c3c3c">T [°C]</text>
<rect x="1632" y="483.06" width="29.8" height="9.8" fill="#8b8000"/>
<text transform="translate(1665.2 490.66) scale(0.942 1)" fill="#3c3c3c" text-decoration="line-through">IQFlow Air [mlh]</text>
<rect x="1632" y="498.55" width="29.8" height="9.8" fill="#8b8000"/>
<text transform="translate(1665.2 506.15) scale(0.942 1)" fill="#3c3c3c" text-decoration="line-through">IQFlow CO2 [mlh]</text>
<rect x="1632" y="514.04" width="29.8" height="9.8" fill="#8b8000"/>
<text transform="translate(1665.2 521.64) scale(0.942 1)" fill="#3c3c3c">IQFlow O2 [mlh]</text>
<rect x="1632" y="529.53" width="29.8" height="9.8" fill="#ff0000"/>
<text transform="translate(1665.2 537.13) scale(0.942 1)" fill="#3c3c3c">pH [-log(H+)]</text>
<rect x="1632" y="545.02" width="29.8" height="9.8" fill="#808080"/>
<text transform="translate(1665.2 552.62) scale(0.942 1)" fill="#3c3c3c" text-decoration="line-through">parallaxPumpAcid_mlh</text>
<rect x="1632" y="560.51" width="29.8" height="9.8" fill="#0000ff"/>
<text transform="translate(1665.2 568.11) scale(0.942 1)" fill="#3c3c3c" text-decoration="line-through">Acid [ml]</text>
<rect x="1632" y="576.00" width="29.8" height="9.8" fill="#808080"/>
<text transform="translate(1665.2 583.60) scale(0.942 1)" fill="#3c3c3c" text-decoration="line-through">parallaxPumpBase_mlh</text>
<rect x="1632" y="591.49" width="29.8" height="9.8" fill="#0000ff"/>
<text transform="translate(1665.2 599.09) scale(0.942 1)" fill="#3c3c3c" text-decoration="line-through">Base [ml]</text>
<rect x="1632" y="606.98" width="29.8" height="9.8" fill="#808080"/>
<text transform="translate(1665.2 614.58) scale(0.942 1)" fill="#3c3c3c" text-decoration="line-through">parallaxPumpFeed_mlh</text>
<rect x="1632" y="622.47" width="29.8" height="9.8" fill="#0000ff"/>
<text transform="translate(1665.2 630.07) scale(0.942 1)" fill="#3c3c3c" text-decoration="line-through">Feed [ml]</text>
<rect x="1632" y="637.96" width="29.8" height="9.8" fill="#808080"/>
<text transform="translate(1665.2 645.56) scale(0.942 1)" fill="#3c3c3c" text-decoration="line-through">parallaxPumpAntifoam_mlh</text>
<rect x="1632" y="653.45" width="29.8" height="9.8" fill="#0000ff"/>
<text transform="translate(1665.2 661.05) scale(0.942 1)" fill="#3c3c3c" text-decoration="line-through">Antifoam [ml]</text>
<rect x="1632" y="668.94" width="29.8" height="9.8" fill="#ff0000"/>
<text transform="translate(1665.2 676.54) scale(0.942 1)" fill="#3c3c3c" text-decoration="line-through">Thermostat [W]</text>
<rect x="1632" y="684.43" width="29.8" height="9.8" fill="#808080"/>
<text transform="translate(1665.2 692.03) scale(0.942 1)" fill="#3c3c3c" text-decoration="line-through">GSS CO2 [ppm]</text>
</svg>
<!-- taskbar -->
<div class="abs" style="left:0;top:981px;width:1800px;height:1px;background:#f0f0f0"></div>
<div id="task" class="abs"><svg class="abs" style="left:0;top:0" width="1800" height="31" viewBox="0 0 1800 31"><defs><linearGradient id="gG" x1="0" y1="0" x2="1" y2="0"><stop offset="0" stop-color="#2fd6b4"/><stop offset=".45" stop-color="#ff9a1f"/><stop offset="1" stop-color="#ff1f6e"/></linearGradient><linearGradient id="gU" x1="0" y1="1" x2="1" y2="0.3"><stop offset="0" stop-color="#ff7eb0"/><stop offset=".55" stop-color="#c59af0"/><stop offset="1" stop-color="#9d9cff"/></linearGradient><linearGradient id="gF" x1="0" y1="0" x2="1" y2="1"><stop offset="0" stop-color="#c44bf0"/><stop offset="1" stop-color="#f548d6"/></linearGradient><linearGradient id="gT" x1="0" y1="1" x2="1" y2="0"><stop offset="0" stop-color="#9a86f5"/><stop offset=".45" stop-color="#f23d9a"/><stop offset="1" stop-color="#ffa21f"/></linearGradient><linearGradient id="gK" x1="0" y1="0" x2="1" y2="0"><stop offset="0" stop-color="#1fe4ee"/><stop offset=".55" stop-color="#58b4ee"/><stop offset="1" stop-color="#b05ad8"/></linearGradient><linearGradient id="gB" gradientUnits="userSpaceOnUse" x1="223" y1="20" x2="246" y2="10"><stop offset="0" stop-color="#2f7df6"/><stop offset=".5" stop-color="#30c0f0"/><stop offset="1" stop-color="#8aeedd"/></linearGradient><linearGradient id="gE" x1="0" y1="0.7" x2="1" y2="0.3"><stop offset="0" stop-color="#ff5d8f"/><stop offset="1" stop-color="#ffa04a"/></linearGradient><linearGradient id="gD" gradientUnits="userSpaceOnUse" x1="0" y1="5" x2="0" y2="24"><stop offset="0" stop-color="#1f86ff"/><stop offset="1" stop-color="#12b6ff"/></linearGradient></defs><rect x="5.3" y="5.1" width="4.5" height="4.1" rx=".5" fill="#ececec"/><rect x="13.7" y="5.1" width="4.5" height="4.1" rx=".5" fill="#ececec"/><rect x="22.2" y="5.1" width="4.5" height="4.1" rx=".5" fill="#ececec"/><rect x="5.3" y="13.4" width="4.5" height="4.1" rx=".5" fill="#ececec"/><rect x="13.7" y="13.4" width="4.5" height="4.1" rx=".5" fill="#ececec"/><rect x="22.2" y="13.4" width="4.5" height="4.1" rx=".5" fill="#ececec"/><rect x="5.3" y="22.0" width="4.5" height="4.1" rx=".5" fill="#ececec"/><rect x="13.7" y="22.0" width="4.5" height="4.1" rx=".5" fill="#ececec"/><rect x="22.2" y="22.0" width="4.5" height="4.1" rx=".5" fill="#ececec"/><path d="M49.37 7.45L49.66 4.64L53.14 4.64L53.43 7.45L55.58 8.35L57.78 6.56L60.24 9.02L58.45 11.22L59.35 13.37L62.16 13.66L62.16 17.14L59.35 17.43L58.45 19.58L60.24 21.78L57.78 24.24L55.58 22.45L53.43 23.35L53.14 26.16L49.66 26.16L49.37 23.35L47.22 22.45L45.02 24.24L42.56 21.78L44.35 19.58L43.45 17.43L40.64 17.14L40.64 13.66L43.45 13.37L44.35 11.22L42.56 9.02L45.02 6.56L47.22 8.35Z" fill="none" stroke="url(#gG)" stroke-width="1.6" stroke-linejoin="round"/><circle cx="51.4" cy="15.4" r="4.3" fill="none" stroke="url(#gG)" stroke-width="1.5"/><g fill="none" stroke="url(#gU)" stroke-width="1.7" stroke-linecap="round" stroke-linejoin="round"><path d="M83.6 12.4H79.4Q77.4 12.4 77.4 14.4V24Q77.4 26 79.4 26H96.4Q98.4 26 98.4 24.6M98.4 20.4V14.4Q98.4 12.4 96.4 12.4H92.6"/><path d="M84.3 14.2V8.4Q84.3 4.7 88 4.7Q91.7 4.7 91.7 8.4V12"/><path d="M88 15.6V23.4M85.2 20.8L88 23.6L90.8 20.8"/></g><g fill="none" stroke="url(#gF)" stroke-width="1.8" stroke-linecap="round" stroke-linejoin="round"><path d="M114.2 17.2V7.8Q114.2 6.2 115.8 6.2H122.4L125.2 9H135.2"/><path d="M135.2 13V24Q135.2 25.6 133.6 25.6H123.2"/><path d="M119.6 25.6H115.8Q114.2 25.6 114.2 24V21.8"/></g><g fill="none" stroke-width="1.7" stroke-linecap="round" stroke-linejoin="round"><path d="M156.1 15.9L152.3 9.4A10.5 10.5 0 0 1 167.6 7.1" stroke="#ff2458"/><path d="M163.6 11.4L170.7 11.4A10.5 10.5 0 0 1 164.6 25.2" stroke="#ffd000"/><path d="M164.9 17.9L159.5 25.7A10.5 10.5 0 0 1 150.6 13.7" stroke="#10e0a0"/><circle cx="161" cy="15.3" r="4.2" stroke="#8fe4ff"/></g><g fill="none" stroke-width="1.7" stroke-linecap="round" stroke-linejoin="round"><path d="M192.7 15.9L188.9 9.4A10.5 10.5 0 0 1 204.2 7.1" stroke="#ff2458"/><path d="M200.2 11.4L207.3 11.4A10.5 10.5 0 0 1 201.2 25.2" stroke="#ffd000"/><path d="M201.5 17.9L196.1 25.7A10.5 10.5 0 0 1 187.2 13.7" stroke="#10e0a0"/><circle cx="197.6" cy="15.3" r="4.2" stroke="#8fe4ff"/></g><g fill="none" stroke-width="1.7" stroke-linecap="round" stroke-linejoin="round"><path d="M229.4 15.9L225.6 9.4A10.5 10.5 0 0 1 240.9 7.1" stroke="url(#gB)"/><path d="M236.9 11.4L244.0 11.4A10.5 10.5 0 0 1 237.9 25.2" stroke="url(#gB)"/><path d="M238.2 17.9L232.8 25.7A10.5 10.5 0 0 1 223.9 13.7" stroke="url(#gB)"/><circle cx="234.3" cy="15.3" r="4.2" stroke="url(#gB)"/></g><g fill="#171826" stroke="#c0c0c0" stroke-width=".8" stroke-linejoin="round"><path d="M201.8 5.4H204.2L207.4 2.6V10.8L204.2 8.2H201.8Z"/><path d="M209.4 4.4Q210.8 6.7 209.4 9" fill="none"/><path d="M211.2 3.2Q213.4 6.7 211.2 10.2" fill="none"/></g><g fill="none" stroke="url(#gT)" stroke-width="1.8" stroke-linecap="round" stroke-linejoin="round"><path d="M281 12.4V9.2Q281 6.4 278.2 6.4H262.8Q260 6.4 260 9.2V21.6Q260 24.4 262.8 24.4H278.2Q281 24.4 281 21.6V18.4H271.8"/></g><path d="M264.6 11.8L268.4 14.6L264.6 17.4" fill="none" stroke="#ff8a2a" stroke-width="1.6" stroke-linecap="round" stroke-linejoin="round"/><g fill="none" stroke="url(#gD)" stroke-width="1.7" stroke-linecap="round" stroke-linejoin="round"><path d="M305.6 5.6V17.6"/><path d="M309.2 11V17.6"/><path d="M298.8 16.6Q298 15 299.8 14.6L302 14.4L307.3 19.2L312.8 14.4L315 14.6Q316.6 15 315.8 16.6L307.3 23.4Z" stroke-width="1.5"/></g><circle cx="309.2" cy="6.6" r="1" fill="#2a8cff"/><path d="M297.6 25.4H317.2" stroke="#14b4ff" stroke-width="1.9" stroke-linecap="round"/><g fill="none" stroke="url(#gK)" stroke-width="1.6" stroke-linecap="round" stroke-linejoin="round"><path d="M338.4 6H336.4Q334.6 6 334.6 7.8V15.4M334.6 19.4V23.6Q334.6 25.4 336.4 25.4H338M342 25.4H351.6Q353.4 25.4 353.4 23.6V15.6M353.4 11.6V7.8Q353.4 6 351.6 6H343.6"/></g><path d="M338.6 9.4V22.2M345.4 9.6L339.4 15.6L345.8 22.2" fill="none" stroke="#35c8ee" stroke-width="2.9" stroke-linejoin="round"/><path d="M349.3 14V22.2" stroke="#9a86e6" stroke-width="2.6"/><circle cx="349.3" cy="10.6" r="1.6" fill="#ff9a4a"/><rect x="145.7" y="29.8" width="31" height="1.4" fill="#55566a"/><rect x="181" y="29.4" width="33" height="1.8" fill="#b48cf5"/><rect x="292.3" y="29.8" width="30.7" height="1.4" fill="#4a4b5c"/><rect x="328.2" y="29.8" width="31" height="1.4" fill="#4a4b5c"/><g fill="none" stroke="#dcdce2" stroke-width="1.05" stroke-linecap="round" stroke-linejoin="round"><path d="M1560.5 9.4H1572.7V19.5H1568L1566.5 21.5L1565 19.5H1560.5Z"/><path d="M1566.5 11.6V15.4M1566.5 17V17.2" stroke-width="1.4" stroke="#f4f4f4"/><circle cx="1587.8" cy="15.3" r="5.6"/><path d="M1587.8 12L1590.6 15H1589V18H1586.6V15H1585Z" fill="#f4f4f4" stroke="#f4f4f4" stroke-width=".6"/><rect x="1604.3" y="11.2" width="9.4" height="10.4" rx=".9"/><path d="M1606.6 11.2V10.2H1607.8Q1608 9 1609 9Q1610 9 1610.2 10.2H1611.4V11.2" /><path d="M1606.4 14.6H1611.6M1606.4 16.4H1611M1606.4 18.2H1609.6" stroke-width=".9" opacity=".8"/><circle cx="1629.7" cy="15.3" r="6.1"/><path d="M1628.4 13.2L1632 15.4L1628.4 17.6Z"/><path d="M1644.7 13.4H1646.8V17.6H1644.7ZM1646.8 13.4L1650.6 10V21L1646.8 17.6"/><path d="M1653 12Q1655.6 15.5 1653 19"/><path d="M1666 9.2H1678.2V15.6M1666 9.2V20M1667.8 11H1670.6V14.4L1669.2 15.6L1667.8 14.4ZM1669.2 15.6V17.6M1667 19.6H1667.6M1669.6 19.6H1672.6M1667 21.4H1667.6M1669.6 21.4H1672.6" stroke-width=".95"/><rect x="1674.6" y="18" width="3.8" height="3.4" rx=".5"/><path d="M1675.4 17.8V17Q1675.4 15.8 1676.5 15.8Q1677.6 15.8 1677.6 17V17.8" stroke-width=".9"/><path d="M1688 17.4L1691.6 13.8L1695.2 17.4" stroke-width="1.5" stroke="#eeeeee"/></g><circle cx="1591.3" cy="19.1" r="1.9" fill="#e61cf0"/><text x="1733.6" y="15.4" text-anchor="middle" font-family="Liberation Sans, sans-serif" font-size="16.3" fill="#f4f4f4" textLength="39.6" lengthAdjust="spacingAndGlyphs">18:23</text><text x="1733.6" y="27.8" text-anchor="middle" font-family="Liberation Sans, sans-serif" font-size="11.6" fill="#f4f4f4" textLength="56" lengthAdjust="spacingAndGlyphs">3 Jul 2024</text><g fill="none" stroke="url(#gE)" stroke-width="1.5" stroke-linejoin="round" stroke-linecap="round"><rect x="1776" y="7.5" width="15.8" height="15.8" rx="1"/></g><path d="M1778.6 20.3H1789.2" stroke="#ff6f86" stroke-width="1.4" stroke-linecap="round"/></svg></div>
</body></html>
